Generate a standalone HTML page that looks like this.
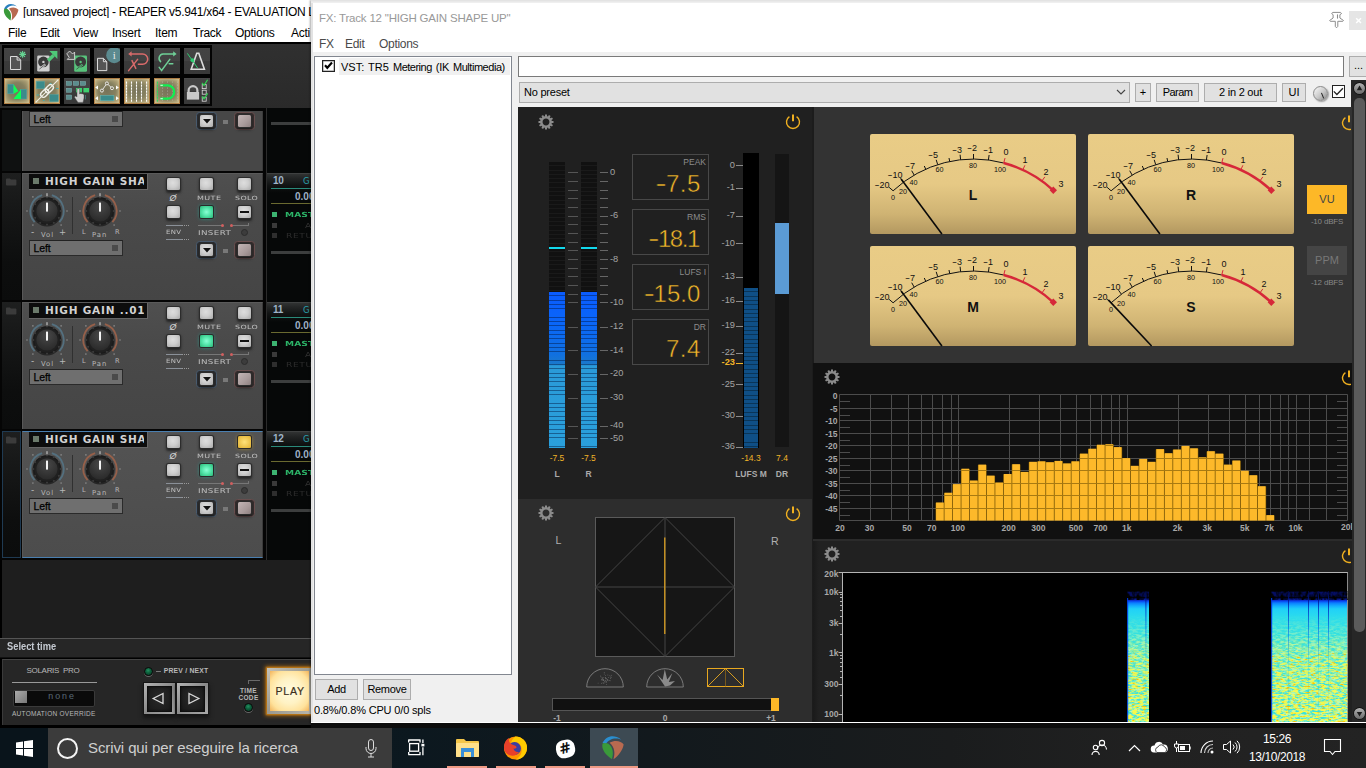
<!DOCTYPE html>
<html><head><meta charset="utf-8"><title>REAPER FX</title>
<style>
*{box-sizing:border-box;margin:0;padding:0}
html,body{width:1366px;height:768px;overflow:hidden;background:#1d1d1d;font-family:"Liberation Sans",sans-serif;font-size:12px;color:#000}
.a{position:absolute}
.t{position:absolute;white-space:nowrap;line-height:1}
svg{position:absolute;overflow:visible}
.sui{font-family:"Liberation Sans",sans-serif}
.tb{position:absolute;width:26px;height:26px;overflow:hidden;background:linear-gradient(#4a4a4a 0,#434343 1px,#424242 48%,#3a3a3a 52%,#383838 100%)}
.tb.on{background:radial-gradient(ellipse at center,#77735a 0%,#85805f 45%,#b3a578 80%,#cdb888 100%);box-shadow:inset 0 0 0 1px rgba(165,105,45,.75),inset 0 0 3px 1px rgba(225,210,160,.8)}
.btn{position:absolute;width:13.2px;height:12.2px;border-radius:1.5px;background:radial-gradient(ellipse at 45% 40%,#dedede 0,#cfcfcf 45%,#a8a8a8 100%);box-shadow:0 0 0 1px #2c2c2c,0 1.5px 2.5px 1px rgba(20,20,20,.7)}
.wbtn{position:absolute;background:#e1e1e1;border:1px solid #adadad;font-size:11px;text-align:center;color:#000;white-space:nowrap}
</style></head><body>
<svg width="0" height="0"><defs><radialGradient id="kg" cx=".5" cy=".3" r=".8"><stop offset="0" stop-color="#484848"/><stop offset=".6" stop-color="#333"/><stop offset="1" stop-color="#262626"/></radialGradient></defs></svg><div class="a" style="left:0;top:0;width:1366px;height:42px;background:#fff"></div><svg style="left:2.5px;top:2.5px" width="17" height="18" viewBox="0 0 16 16" preserveAspectRatio="none"><path d="M1 5 C3 1 8 -1 13 3 C10 1.5 5 2 3 6z" fill="#2a7fc0"/><path d="M1 5.5 C0 9 3 13 7 15.5 C8 12 8 8 4.5 5.5 C3 4.8 1.5 5 1 5.5z" fill="#3a9a3a"/><path d="M5.5 5 C9 3 13 4 14.5 6 C14 9.5 11 13.5 8 15.5 C9 12 9 8 5.5 5z" fill="#b86a50"/></svg><div class="t" style="left:23px;top:6px;font-size:12px;color:#000;width:289px;overflow:hidden;letter-spacing:-.32px">[unsaved project] - REAPER v5.941/x64 - EVALUATION L</div><div class="t" style="left:8px;top:27px;font-size:12px;letter-spacing:-.25px">File</div><div class="t" style="left:40px;top:27px;font-size:12px;letter-spacing:-.25px">Edit</div><div class="t" style="left:73px;top:27px;font-size:12px;letter-spacing:-.25px">View</div><div class="t" style="left:112px;top:27px;font-size:12px;letter-spacing:-.25px">Insert</div><div class="t" style="left:155px;top:27px;font-size:12px;letter-spacing:-.25px">Item</div><div class="t" style="left:193px;top:27px;font-size:12px;letter-spacing:-.25px">Track</div><div class="t" style="left:235px;top:27px;font-size:12px;letter-spacing:-.25px">Options</div><div class="t" style="left:291px;top:27px;font-size:12px;letter-spacing:-.25px">Acti</div><div class="a" style="left:0;top:42px;width:312px;height:69px;background:#000"></div><div class="a" style="left:0;top:44px;width:312px;height:63.5px;background:linear-gradient(#303030,#2a2a2a)"></div><div class="a" style="left:2px;top:45px;width:210px;height:61px;background:#030303"></div><div class="tb" style="left:4px;top:48px"><svg style="left:0;top:0" width="26" height="26" viewBox="0 0 26 26"><path d="M6.5 8.5 H13.1 L16.7 12.1 V21.5 H6.5z" fill="#555" stroke="#dcdcdc" stroke-width="1"/><path d="M13.1 8.5 V12.1 H16.7" fill="none" stroke="#dcdcdc" stroke-width="1"/><path d="M15.2 6.4 L22.0 6.4 M16.2 4.0 L21.0 8.8 M18.6 3.0 L18.6 9.8 M21.0 4.0 L16.2 8.8 " stroke="#66d392" stroke-width="1.1" fill="none"/></svg></div><div class="tb" style="left:34px;top:48px"><svg style="left:0;top:0" width="26" height="26" viewBox="0 0 26 26"><rect x="3.2" y="7.4" width="12.4" height="16.2" rx="1.3" fill="#d0d0d0"/><circle cx="9.4" cy="13.88" r="5.3" fill="#3a3a3a"/><circle cx="9.4" cy="13.88" r="1.2" fill="#d0d0d0"/><path d="M5.4 21.1 L11.4 16.380000000000003" stroke="#d0d0d0" stroke-width="2"/><path d="M5.4 21.1 L11.4 16.380000000000003" stroke="#3a3a3a" stroke-width=".7"/><rect x="10.9" y="19.1" width="3.7" height="3.6" fill="#d0d0d0"/><path d="M14.2 12.6 L19.6 7.2" stroke="#4fc878" stroke-width="3.4"/><path d="M15.4 3 H23.4 V11z" fill="#4fc878"/></svg></div><div class="tb" style="left:64px;top:48px"><svg style="left:0;top:0" width="26" height="26" viewBox="0 0 26 26"><rect x="10.2" y="7.4" width="12.8" height="16.4" rx="1.3" fill="#58c47c"/><circle cx="16.6" cy="13.96" r="5.5" fill="#3a3a3a"/><circle cx="16.6" cy="13.96" r="1.2" fill="#58c47c"/><path d="M12.399999999999999 21.299999999999997 L18.6 16.46" stroke="#58c47c" stroke-width="2"/><path d="M12.399999999999999 21.299999999999997 L18.6 16.46" stroke="#3a3a3a" stroke-width=".7"/><rect x="18.1" y="19.2" width="3.8" height="3.6" fill="#58c47c"/><path d="M2.8 5.8 L5.6 3 L8.6 6 L10.6 4 V11.4 H3.2 L5.2 9.4z" fill="#5a5a5a" stroke="#d8d8d8" stroke-width=".9" stroke-linejoin="miter"/></svg></div><div class="tb" style="left:94px;top:48px"><svg style="left:0;top:0" width="26" height="26" viewBox="0 0 26 26"><path d="M3.5 10.3 H9.4 L12.8 13.700000000000001 V22.6 H3.5z" fill="#555" stroke="#dcdcdc" stroke-width="1"/><path d="M9.4 10.3 V13.700000000000001 H12.8" fill="none" stroke="#dcdcdc" stroke-width="1"/><clipPath id="cpi"><rect x="0" y="0" width="26" height="26"/></clipPath><g clip-path="url(#cpi)"><circle cx="20.2" cy="7.2" r="8" fill="#5b8a8f"/><text x="20.2" y="11.4" font-size="11" font-family="Liberation Serif,serif" fill="#e8e8e8" text-anchor="middle">i</text></g></svg></div><div class="tb" style="left:124px;top:48px"><svg style="left:0;top:0" width="26" height="26" viewBox="0 0 26 26"><path d="M6.4 5.9 H18.6 A5.15 5.15 0 0 1 18.6 16.2 H13.8" fill="none" stroke="#d96b6b" stroke-width="1.5"/><path d="M4.2 5.9 L7.6 3.3 V8.5z" fill="#d96b6b"/><path d="M4.6 22.6 L13.6 11.4 M8 12.6 L11.8 20.4" fill="none" stroke="#d96b6b" stroke-width="1.5" stroke-linecap="round"/></svg></div><div class="tb" style="left:154px;top:48px"><svg style="left:0;top:0" width="26" height="26" viewBox="0 0 26 26"><path d="M19.8 5.9 H9 A4.4 4.4 0 0 0 6.6 13.6" fill="none" stroke="#6fcf97" stroke-width="1.5" stroke-linecap="round"/><path d="M22.6 5.9 L19.2 3.3 V8.5z" fill="#6fcf97"/><path d="M5.2 19.4 L7.6 22.4 L15.8 11.4 M15.2 15.7 H18.8" fill="none" stroke="#6fcf97" stroke-width="1.5" stroke-linecap="round"/></svg></div><div class="tb" style="left:184px;top:48px"><svg style="left:0;top:0" width="26" height="26" viewBox="0 0 26 26"><path d="M12.8 5.2 H14.8 L20.4 21.2 H7.2z" fill="none" stroke="#dcdcdc" stroke-width="1.6" stroke-linejoin="miter"/><path d="M3.4 5.4 L13.6 20" stroke="#2ecc71" stroke-width="1"/><circle cx="8.4" cy="12.2" r="1.9" fill="#2ecc71"/></svg></div><div class="tb on" style="left:4px;top:78px"><svg style="left:0;top:0" width="26" height="26" viewBox="0 0 26 26"><rect x="3.8" y="6.2" width="6" height="9.6" fill="#3b8b8b" stroke="#5aa" stroke-width=".4"/><rect x="16.4" y="11.2" width="6.2" height="9.8" fill="#3b8b8b" stroke="#5aa" stroke-width=".4"/><path d="M9.6 6.2 L14.4 13.2 L9.6 15.8z M9.4 21 L17 11.4 V21z" fill="#0dff55"/></svg></div><div class="tb on" style="left:34px;top:78px"><svg style="left:0;top:0" width="26" height="26" viewBox="0 0 26 26"><rect x="2.3" y="3.4" width="8.2" height="7.2" fill="#3b8b8b" stroke="#5aa" stroke-width=".4"/><rect x="15.8" y="16.5" width="8.6" height="7.2" fill="#3b8b8b" stroke="#5aa" stroke-width=".4"/><path d="M15.5 5.5h2 M22 10.5h2.5 M2.5 17h2.5 M9 22.5h1.5" stroke="#4aa" stroke-width="1"/><g transform="rotate(-45 13 13)" fill="none" stroke="#f0f0e8"><path d="M-3 13 H29" stroke-width="1"/><rect x="5.2" y="10.2" width="9.2" height="5.6" rx="2.8" stroke-width="1.4"/><rect x="11.6" y="10.2" width="9.2" height="5.6" rx="2.8" stroke-width="1.4"/></g></svg></div><div class="tb" style="left:64px;top:78px"><svg style="left:0;top:0" width="26" height="26" viewBox="0 0 26 26"><rect x="2.3" y="3.4" width="5.4" height="4" fill="#5b8d8d" stroke="#8bb" stroke-width=".4"/><rect x="9.3" y="3.4" width="5.4" height="4" fill="#5b8d8d" stroke="#8bb" stroke-width=".4"/><rect x="16.3" y="3.4" width="5.4" height="4" fill="#5b8d8d" stroke="#8bb" stroke-width=".4"/><rect x="2.3" y="10.2" width="5.4" height="4.2" fill="#5b8d8d" stroke="#8bb" stroke-width=".4"/><rect x="2.3" y="17" width="5.4" height="4.4" fill="#5b8d8d" stroke="#8bb" stroke-width=".4"/><rect x="12" y="10" width="6" height="4.4" fill="#3fcf6f"/><rect x="19.4" y="10" width="5.6" height="4.4" fill="#3fcf6f"/><path d="M21.5 17 V21.4" stroke="#4a9a9a" stroke-width=".6"/><path d="M13 11.8 a1.3 1.3 0 0 1 2.6 0 V16 l1 -.6 l1.2 .3 l1.2 .2 l1 .8 V20 l-1 4.4 H14 L10.6 19.4 a1.1 1.1 0 0 1 1.8-1 L13 19z" fill="#cfcfcf" stroke="#444" stroke-width=".4"/></svg></div><div class="tb on" style="left:94px;top:78px"><svg style="left:0;top:0" width="26" height="26" viewBox="0 0 26 26"><path d="M7.9 12.6 L12.9 5.4 L18 10.2" fill="none" stroke="#eee" stroke-width=".9"/><circle cx="7.9" cy="12.6" r="1.5" fill="#77735a" stroke="#f4f4f4" stroke-width=".9"/><circle cx="12.9" cy="5.4" r="1.5" fill="#77735a" stroke="#f4f4f4" stroke-width=".9"/><circle cx="18" cy="10.2" r="1.5" fill="#77735a" stroke="#f4f4f4" stroke-width=".9"/><path d="M1.2 9.4 L4 7.4 V11.4z M24.8 9.4 L22 7.4 V11.4z M1.2 20.2 L4 18.2 V22.2z M24.8 20.2 L22 18.2 V22.2z" fill="#fff"/><rect x="6.5" y="17.4" width="13.4" height="5.4" fill="#3b8b8b" stroke="#6bb" stroke-width=".5"/></svg></div><div class="tb on" style="left:124px;top:78px"><svg style="left:0;top:0" width="26" height="26" viewBox="0 0 26 26"><path d="M2.5 3.6 V24" stroke="#fff" stroke-width="1.1" stroke-dasharray="2.1 .9"/><path d="M7.5 3.6 V24" stroke="#fff" stroke-width="1.1" stroke-dasharray="2.1 .9"/><path d="M12.5 3.6 V24" stroke="#fff" stroke-width="1.1" stroke-dasharray="2.1 .9"/><path d="M17.5 3.6 V24" stroke="#fff" stroke-width="1.1" stroke-dasharray="2.1 .9"/><path d="M22.6 3.6 V24" stroke="#fff" stroke-width="1.1" stroke-dasharray="2.1 .9"/></svg></div><div class="tb on" style="left:154px;top:78px"><svg style="left:0;top:0" width="26" height="26" viewBox="0 0 26 26"><path d="M3.4 3.6 V24" stroke="#20e060" stroke-width="1" stroke-dasharray="2.1 .9"/><path d="M8.5 3.6 V24" stroke="#ddd" stroke-width=".8" stroke-dasharray="1 2" opacity=".55"/><path d="M13.5 3.6 V24" stroke="#ddd" stroke-width=".8" stroke-dasharray="1 2" opacity=".55"/><path d="M18.4 3.6 V24" stroke="#ddd" stroke-width=".8" stroke-dasharray="1 2" opacity=".55"/><path d="M23.4 3.6 V24" stroke="#ddd" stroke-width=".8" stroke-dasharray="1 2" opacity=".55"/><path d="M6.4 7.4 H13.6 A6.6 6.6 0 0 1 13.6 20.6 H6.4" fill="none" stroke="#10f050" stroke-width="2.2"/><path d="M6.4 7.4 h2.4 M6.4 20.6 h2.4" stroke="#b8ffc8" stroke-width="1.2"/></svg></div><div class="tb" style="left:184px;top:78px"><svg style="left:0;top:0" width="26" height="26" viewBox="0 0 26 26"><rect x="2.9" y="14" width="12.2" height="7.6" fill="#c9c9c9"/><path d="M4.6 14 V12.6 A4.4 4.4 0 0 1 13.4 12.6 V14" fill="none" stroke="#c9c9c9" stroke-width="2.2"/><rect x="18.2" y="6.6" width="4" height="4" fill="none" stroke="#ddd" stroke-width=".8"/><rect x="18.2" y="12.2" width="4" height="4" fill="none" stroke="#ddd" stroke-width=".8"/><rect x="18.2" y="19.2" width="4" height="4" fill="none" stroke="#ddd" stroke-width=".8"/><path d="M18 4.8 L20 7.4 L23.6 1.8 M18 18.4 L20 21 L23.6 15.4" fill="none" stroke="#2fd050" stroke-width="1.2"/></svg></div><div class="a" style="left:0;top:108px;width:312px;height:452px;background:#050505"></div><div class="a" style="left:265.8px;top:108px;width:46.2px;height:452px;background:#060808;border-left:1px solid #2c2c2c"></div><div class="a" style="left:2px;top:110px;width:19px;height:61px;background:#0f1111"></div><div class="a" style="left:22px;top:110.5px;width:241px;height:60.5px;background:#474747;border-left:1px solid #555;border-right:1px solid #3a3a3a"></div><div class="a" style="left:29px;top:111px;width:94px;height:16px;background:#6f6f6f;border:1px solid #2a2a2a;border-top-color:#222"></div><div class="t" style="left:33.5px;top:114.3px;font-size:10.5px;color:#000;letter-spacing:-.1px;-webkit-text-stroke:.25px #000">Left</div><div class="a" style="left:112px;top:116px;width:6px;height:6px;background:#4a4a4a"></div><div class="a" style="left:196px;top:111.5px;width:20.5px;height:18.8px;border-radius:3.5px;border:1px solid #4a5c70;background:#2c2e31"></div><div class="btn" style="left:200px;top:114.7px"><svg style="left:2.6px;top:4px" width="8" height="5"><path d="M0 0h8l-4 4.6z" fill="#111"/></svg></div><div class="a" style="left:223px;top:119.7px;width:5px;height:4.4px;background:#787878"></div><div class="a" style="left:234.1px;top:111.5px;width:20.5px;height:18.8px;border-radius:3.5px;border:1px solid #6a5050;background:#352e2e"></div><div class="btn" style="left:238px;top:114.7px;background:linear-gradient(135deg,#c4b6b6,#a89a9a 60%,#8e8080)"></div><div class="a" style="left:271px;top:122.1px;width:41px;height:2.9px;background:#3c3e3e"></div><div class="a" style="left:2px;top:173px;width:19px;height:127px;background:linear-gradient(#1e1f1f 0,#171818 25%,#0d0e0e 70%,#0b0c0c 100%)"></div><svg style="left:5.8px;top:178.4px" width="10.4" height="7.6" viewBox="0 0 12 10" preserveAspectRatio="none"><path d="M0 1.5 a1 1 0 0 1 1-1 h3.5 l1.2 1.5 h5.3 a1 1 0 0 1 1 1 v6 a1 1 0 0 1-1 1 h-10 a1 1 0 0 1-1-1z" fill="#3b3b3b"/></svg><div class="a" style="left:22px;top:173px;width:241px;height:127px;background:linear-gradient(#4f4f4f 0,#4a4a4a 30%,#454545 100%);border-top:1px solid #5a5a5a;border-left:1px solid #585858;border-right:1px solid #3a3a3a"></div><div class="a" style="left:29px;top:174px;width:119px;height:16px;background:#0d0d0d;border-bottom:1px solid #666;border-right:1px solid #666"></div><div class="a" style="left:33px;top:178px;width:6px;height:6px;background:#6b7a6b"></div><div class="t" style="left:45px;top:176px;font-family:'DejaVu Sans',sans-serif;font-weight:bold;font-size:10.5px;color:#d2d2d2;letter-spacing:0.78px;width:99px;overflow:hidden">HIGH GAIN SHA</div><svg style="left:24px;top:188.3px" width="46" height="46" viewBox="-23 -23 46 46"><path d="M-12.41 11.17 A16.7 16.7 0 0 1 -4.88 -15.97 M4.88 -15.97 A16.7 16.7 0 0 1 12.41 11.17" fill="none" stroke="#54707f" stroke-width="1.8"/><rect x="-.9" y="-17.8" width="1.8" height="3.6" fill="#9a9a9a"/><circle cy="1" r="14.6" fill="#262626"/><circle r="13.8" fill="#1b1b1b"/><circle cx="0.0" cy="-13.6" r="1.1" fill="#3a3a3a"/><circle cx="6.8" cy="-11.8" r="1.1" fill="#3a3a3a"/><circle cx="11.8" cy="-6.8" r="1.1" fill="#3a3a3a"/><circle cx="13.6" cy="-0.0" r="1.1" fill="#3a3a3a"/><circle cx="11.8" cy="6.8" r="1.1" fill="#3a3a3a"/><circle cx="6.8" cy="11.8" r="1.1" fill="#3a3a3a"/><circle cx="0.0" cy="13.6" r="1.1" fill="#3a3a3a"/><circle cx="-6.8" cy="11.8" r="1.1" fill="#3a3a3a"/><circle cx="-11.8" cy="6.8" r="1.1" fill="#3a3a3a"/><circle cx="-13.6" cy="0.0" r="1.1" fill="#3a3a3a"/><circle cx="-11.8" cy="-6.8" r="1.1" fill="#3a3a3a"/><circle cx="-6.8" cy="-11.8" r="1.1" fill="#3a3a3a"/><circle r="12.6" fill="#202020"/><circle r="10.6" fill="url(#kg)"/><rect x="-1" y="-8.4" width="2" height="9" fill="#f4f4f4"/><circle cx="-14.1" cy="14.1" r=".8" fill="#8c8c8c"/><circle cx="-20.0" cy="-0.0" r=".8" fill="#8c8c8c"/><circle cx="-14.1" cy="-14.1" r=".8" fill="#8c8c8c"/><circle cx="14.1" cy="-14.1" r=".8" fill="#8c8c8c"/><circle cx="20.0" cy="-0.0" r=".8" fill="#8c8c8c"/><circle cx="14.1" cy="14.1" r=".8" fill="#8c8c8c"/></svg><svg style="left:77px;top:188.3px" width="46" height="46" viewBox="-23 -23 46 46"><path d="M-12.41 11.17 A16.7 16.7 0 0 1 -4.88 -15.97 M4.88 -15.97 A16.7 16.7 0 0 1 12.41 11.17" fill="none" stroke="#96604a" stroke-width="1.8"/><rect x="-.9" y="-17.8" width="1.8" height="3.6" fill="#9a9a9a"/><circle cy="1" r="14.6" fill="#262626"/><circle r="13.8" fill="#1b1b1b"/><circle cx="0.0" cy="-13.6" r="1.1" fill="#3a3a3a"/><circle cx="6.8" cy="-11.8" r="1.1" fill="#3a3a3a"/><circle cx="11.8" cy="-6.8" r="1.1" fill="#3a3a3a"/><circle cx="13.6" cy="-0.0" r="1.1" fill="#3a3a3a"/><circle cx="11.8" cy="6.8" r="1.1" fill="#3a3a3a"/><circle cx="6.8" cy="11.8" r="1.1" fill="#3a3a3a"/><circle cx="0.0" cy="13.6" r="1.1" fill="#3a3a3a"/><circle cx="-6.8" cy="11.8" r="1.1" fill="#3a3a3a"/><circle cx="-11.8" cy="6.8" r="1.1" fill="#3a3a3a"/><circle cx="-13.6" cy="0.0" r="1.1" fill="#3a3a3a"/><circle cx="-11.8" cy="-6.8" r="1.1" fill="#3a3a3a"/><circle cx="-6.8" cy="-11.8" r="1.1" fill="#3a3a3a"/><circle r="12.6" fill="#202020"/><circle r="10.6" fill="url(#kg)"/><rect x="-1" y="-8.4" width="2" height="9" fill="#f4f4f4"/><circle cx="-14.1" cy="14.1" r=".8" fill="#8c8c8c"/><circle cx="-20.0" cy="-0.0" r=".8" fill="#8c8c8c"/><circle cx="-14.1" cy="-14.1" r=".8" fill="#8c8c8c"/><circle cx="14.1" cy="-14.1" r=".8" fill="#8c8c8c"/><circle cx="20.0" cy="-0.0" r=".8" fill="#8c8c8c"/><circle cx="14.1" cy="14.1" r=".8" fill="#8c8c8c"/></svg><div class="a" style="left:72px;top:197px;width:1px;height:36.5px;background:#303030"></div><div class="t" style="left:31px;top:227.6px;font-family:'DejaVu Sans',sans-serif;font-size:6.8px;color:#b8b8b8;font-size:9px;color:#c0c0c0">-</div><div class="t" style="left:41px;top:231.6px;font-family:'DejaVu Sans',sans-serif;font-size:6.8px;color:#b8b8b8;letter-spacing:1px">Vol</div><div class="t" style="left:59px;top:228px;font-family:'DejaVu Sans',sans-serif;font-size:6.8px;color:#b8b8b8;font-size:8.5px">+</div><div class="t" style="left:82px;top:229.4px;font-family:'DejaVu Sans',sans-serif;font-size:6.8px;color:#b8b8b8;font-size:6.6px">L</div><div class="t" style="left:92px;top:231.6px;font-family:'DejaVu Sans',sans-serif;font-size:6.8px;color:#b8b8b8;letter-spacing:1px">Pan</div><div class="t" style="left:115px;top:229.4px;font-family:'DejaVu Sans',sans-serif;font-size:6.8px;color:#b8b8b8;font-size:6.6px">R</div><div class="a" style="left:29px;top:240px;width:94px;height:16px;background:#6f6f6f;border:1px solid #2a2a2a;border-top-color:#222"></div><div class="t" style="left:33.5px;top:243.3px;font-size:10.5px;color:#000;letter-spacing:-.1px;-webkit-text-stroke:.25px #000">Left</div><div class="a" style="left:112px;top:245px;width:6px;height:6px;background:#4a4a4a"></div><div class="btn" style="left:167px;top:177.9px;"></div><div class="btn" style="left:200px;top:177.9px;"></div><div class="btn" style="left:238px;top:177.9px;"></div><div class="btn" style="left:167px;top:206px"></div><div class="btn" style="left:200px;top:206px;background:radial-gradient(#8affd4 0,#5aeab0 40%,#28b878 100%);box-shadow:0 0 0 1px #2a2a2a,0 0 4px #2a9"></div><div class="btn" style="left:238px;top:206px"><div class="a" style="left:2.2px;top:4.9px;width:9px;height:2px;background:#111"></div></div><div class="t" style="left:169.5px;top:193.6px;font-size:9px;color:#d8d8d8;font-style:italic">Ø</div><div class="t" style="left:196.6px;top:195.8px;font-family:'DejaVu Sans',sans-serif;font-size:5.8px;color:#c0c0c0;letter-spacing:.3px;transform:scaleX(1.5);transform-origin:0 0;transform:scaleX(1.38)">MUTE</div><div class="t" style="left:234.7px;top:195.8px;font-family:'DejaVu Sans',sans-serif;font-size:5.8px;color:#c0c0c0;letter-spacing:.3px;transform:scaleX(1.5);transform-origin:0 0;transform:scaleX(1.36)">SOLO</div><div class="t" style="left:166px;top:230.2px;font-family:'DejaVu Sans',sans-serif;font-size:5.8px;color:#c0c0c0;letter-spacing:.3px;transform:scaleX(1.5);transform-origin:0 0;transform:scaleX(1.2)">ENV</div><div class="t" style="left:197.6px;top:229.8px;font-family:'DejaVu Sans',sans-serif;font-size:5.8px;color:#c0c0c0;letter-spacing:.3px;transform:scaleX(1.5);transform-origin:0 0;font-size:6.6px;transform:scaleX(1.32)">INSERT</div><div class="a" style="left:166px;top:225px;width:16px;height:1px;background:#8a9098"></div><div class="a" style="left:182px;top:225px;width:7px;height:1px;border-top:1px dotted #999"></div><div class="a" style="left:166px;top:239px;width:16px;height:1px;background:#8a9098"></div><div class="a" style="left:182px;top:239px;width:7px;height:1px;border-top:1px dotted #999"></div><div class="a" style="left:198px;top:225px;width:24px;height:1px;background:#777"></div><div class="a" style="left:221px;top:224px;width:3px;height:3px;background:#d06060;border-radius:2px"></div><div class="a" style="left:230px;top:224px;width:3px;height:3px;background:#d06060;border-radius:2px"></div><div class="a" style="left:233px;top:223px;width:16px;height:3px;border-bottom:1px solid #777;border-right:1px solid #777"></div><div class="a" style="left:240.9px;top:229px;width:7px;height:7px;border-radius:4px;background:#3c3c3c;border:1px solid #2c2c2c"></div><div class="a" style="left:196px;top:240.5px;width:20.5px;height:18.8px;border-radius:3.5px;border:1px solid #4a5c70;background:#2c2e31"></div><div class="btn" style="left:200px;top:243.7px"><svg style="left:2.6px;top:4px" width="8" height="5"><path d="M0 0h8l-4 4.6z" fill="#111"/></svg></div><div class="a" style="left:223px;top:248.7px;width:5px;height:4.4px;background:#787878"></div><div class="a" style="left:234.1px;top:240.5px;width:20.5px;height:18.8px;border-radius:3.5px;border:1px solid #6a5050;background:#352e2e"></div><div class="btn" style="left:238px;top:243.7px;background:linear-gradient(135deg,#c4b6b6,#a89a9a 60%,#8e8080)"></div><div class="a" style="left:266.7px;top:172.8px;width:46px;height:22px;background:linear-gradient(#4a4c4c 0,#303232 1.2px,#242626 5px,#121414 12px,#060808 20px)"></div><div class="t" style="left:273px;top:175.8px;font-family:'Liberation Sans',sans-serif;font-weight:bold;font-size:10px;color:#9fb4c8;letter-spacing:-.2px">10</div><div class="t" style="left:303px;top:177px;font-size:8.5px;color:#2aa0b0;font-family:'DejaVu Sans',sans-serif">G</div><div class="a" style="left:271px;top:188px;width:41px;height:1px;background:#2a8a7a"></div><div class="t" style="left:295px;top:192px;font-family:'Liberation Sans',sans-serif;font-weight:bold;font-size:10px;color:#9fb0c4">0.00</div><div class="a" style="left:271px;top:203px;width:41px;height:1px;background:#6a6a30"></div><div class="a" style="left:272px;top:212px;width:5px;height:5px;background:#3cb371"></div><div class="t" style="left:285px;top:211.5px;font-family:'DejaVu Sans',sans-serif;font-size:7px;letter-spacing:.1px;transform:scaleX(1.3);transform-origin:0 0;color:#2cb468;font-weight:bold">MAST</div><div class="a" style="left:272px;top:223px;width:5px;height:5px;background:#3a3a3a"></div><div class="t" style="left:305px;top:222.5px;font-family:'DejaVu Sans',sans-serif;font-size:7px;letter-spacing:.1px;transform:scaleX(1.3);transform-origin:0 0;color:#333">A</div><div class="a" style="left:272px;top:233px;width:5px;height:5px;background:#2e2e2e"></div><div class="t" style="left:286px;top:232.5px;font-family:'DejaVu Sans',sans-serif;font-size:7px;letter-spacing:.1px;transform:scaleX(1.3);transform-origin:0 0;color:#2c2c2c;letter-spacing:.5px">RETU</div><div class="a" style="left:271px;top:251.1px;width:41px;height:2.9px;background:#3c3e3e"></div><div class="a" style="left:2px;top:302px;width:19px;height:127px;background:linear-gradient(#1e1f1f 0,#171818 25%,#0d0e0e 70%,#0b0c0c 100%)"></div><svg style="left:5.8px;top:307.4px" width="10.4" height="7.6" viewBox="0 0 12 10" preserveAspectRatio="none"><path d="M0 1.5 a1 1 0 0 1 1-1 h3.5 l1.2 1.5 h5.3 a1 1 0 0 1 1 1 v6 a1 1 0 0 1-1 1 h-10 a1 1 0 0 1-1-1z" fill="#3b3b3b"/></svg><div class="a" style="left:22px;top:302px;width:241px;height:127px;background:linear-gradient(#4f4f4f 0,#4a4a4a 30%,#454545 100%);border-top:1px solid #5a5a5a;border-left:1px solid #585858;border-right:1px solid #3a3a3a"></div><div class="a" style="left:29px;top:303px;width:119px;height:16px;background:#0d0d0d;border-bottom:1px solid #666;border-right:1px solid #666"></div><div class="a" style="left:33px;top:307px;width:6px;height:6px;background:#6b7a6b"></div><div class="t" style="left:45px;top:305px;font-family:'DejaVu Sans',sans-serif;font-weight:bold;font-size:10.5px;color:#d2d2d2;letter-spacing:0.78px;width:99px;overflow:hidden">HIGH GAIN ..01</div><svg style="left:24px;top:317.3px" width="46" height="46" viewBox="-23 -23 46 46"><path d="M-12.41 11.17 A16.7 16.7 0 0 1 -4.88 -15.97 M4.88 -15.97 A16.7 16.7 0 0 1 12.41 11.17" fill="none" stroke="#54707f" stroke-width="1.8"/><rect x="-.9" y="-17.8" width="1.8" height="3.6" fill="#9a9a9a"/><circle cy="1" r="14.6" fill="#262626"/><circle r="13.8" fill="#1b1b1b"/><circle cx="0.0" cy="-13.6" r="1.1" fill="#3a3a3a"/><circle cx="6.8" cy="-11.8" r="1.1" fill="#3a3a3a"/><circle cx="11.8" cy="-6.8" r="1.1" fill="#3a3a3a"/><circle cx="13.6" cy="-0.0" r="1.1" fill="#3a3a3a"/><circle cx="11.8" cy="6.8" r="1.1" fill="#3a3a3a"/><circle cx="6.8" cy="11.8" r="1.1" fill="#3a3a3a"/><circle cx="0.0" cy="13.6" r="1.1" fill="#3a3a3a"/><circle cx="-6.8" cy="11.8" r="1.1" fill="#3a3a3a"/><circle cx="-11.8" cy="6.8" r="1.1" fill="#3a3a3a"/><circle cx="-13.6" cy="0.0" r="1.1" fill="#3a3a3a"/><circle cx="-11.8" cy="-6.8" r="1.1" fill="#3a3a3a"/><circle cx="-6.8" cy="-11.8" r="1.1" fill="#3a3a3a"/><circle r="12.6" fill="#202020"/><circle r="10.6" fill="url(#kg)"/><rect x="-1" y="-8.4" width="2" height="9" fill="#f4f4f4"/><circle cx="-14.1" cy="14.1" r=".8" fill="#8c8c8c"/><circle cx="-20.0" cy="-0.0" r=".8" fill="#8c8c8c"/><circle cx="-14.1" cy="-14.1" r=".8" fill="#8c8c8c"/><circle cx="14.1" cy="-14.1" r=".8" fill="#8c8c8c"/><circle cx="20.0" cy="-0.0" r=".8" fill="#8c8c8c"/><circle cx="14.1" cy="14.1" r=".8" fill="#8c8c8c"/></svg><svg style="left:77px;top:317.3px" width="46" height="46" viewBox="-23 -23 46 46"><path d="M-12.41 11.17 A16.7 16.7 0 0 1 -4.88 -15.97 M4.88 -15.97 A16.7 16.7 0 0 1 12.41 11.17" fill="none" stroke="#96604a" stroke-width="1.8"/><rect x="-.9" y="-17.8" width="1.8" height="3.6" fill="#9a9a9a"/><circle cy="1" r="14.6" fill="#262626"/><circle r="13.8" fill="#1b1b1b"/><circle cx="0.0" cy="-13.6" r="1.1" fill="#3a3a3a"/><circle cx="6.8" cy="-11.8" r="1.1" fill="#3a3a3a"/><circle cx="11.8" cy="-6.8" r="1.1" fill="#3a3a3a"/><circle cx="13.6" cy="-0.0" r="1.1" fill="#3a3a3a"/><circle cx="11.8" cy="6.8" r="1.1" fill="#3a3a3a"/><circle cx="6.8" cy="11.8" r="1.1" fill="#3a3a3a"/><circle cx="0.0" cy="13.6" r="1.1" fill="#3a3a3a"/><circle cx="-6.8" cy="11.8" r="1.1" fill="#3a3a3a"/><circle cx="-11.8" cy="6.8" r="1.1" fill="#3a3a3a"/><circle cx="-13.6" cy="0.0" r="1.1" fill="#3a3a3a"/><circle cx="-11.8" cy="-6.8" r="1.1" fill="#3a3a3a"/><circle cx="-6.8" cy="-11.8" r="1.1" fill="#3a3a3a"/><circle r="12.6" fill="#202020"/><circle r="10.6" fill="url(#kg)"/><rect x="-1" y="-8.4" width="2" height="9" fill="#f4f4f4"/><circle cx="-14.1" cy="14.1" r=".8" fill="#8c8c8c"/><circle cx="-20.0" cy="-0.0" r=".8" fill="#8c8c8c"/><circle cx="-14.1" cy="-14.1" r=".8" fill="#8c8c8c"/><circle cx="14.1" cy="-14.1" r=".8" fill="#8c8c8c"/><circle cx="20.0" cy="-0.0" r=".8" fill="#8c8c8c"/><circle cx="14.1" cy="14.1" r=".8" fill="#8c8c8c"/></svg><div class="a" style="left:72px;top:326px;width:1px;height:36.5px;background:#303030"></div><div class="t" style="left:31px;top:356.6px;font-family:'DejaVu Sans',sans-serif;font-size:6.8px;color:#b8b8b8;font-size:9px;color:#c0c0c0">-</div><div class="t" style="left:41px;top:360.6px;font-family:'DejaVu Sans',sans-serif;font-size:6.8px;color:#b8b8b8;letter-spacing:1px">Vol</div><div class="t" style="left:59px;top:357px;font-family:'DejaVu Sans',sans-serif;font-size:6.8px;color:#b8b8b8;font-size:8.5px">+</div><div class="t" style="left:82px;top:358.4px;font-family:'DejaVu Sans',sans-serif;font-size:6.8px;color:#b8b8b8;font-size:6.6px">L</div><div class="t" style="left:92px;top:360.6px;font-family:'DejaVu Sans',sans-serif;font-size:6.8px;color:#b8b8b8;letter-spacing:1px">Pan</div><div class="t" style="left:115px;top:358.4px;font-family:'DejaVu Sans',sans-serif;font-size:6.8px;color:#b8b8b8;font-size:6.6px">R</div><div class="a" style="left:29px;top:369px;width:94px;height:16px;background:#6f6f6f;border:1px solid #2a2a2a;border-top-color:#222"></div><div class="t" style="left:33.5px;top:372.3px;font-size:10.5px;color:#000;letter-spacing:-.1px;-webkit-text-stroke:.25px #000">Left</div><div class="a" style="left:112px;top:374px;width:6px;height:6px;background:#4a4a4a"></div><div class="btn" style="left:167px;top:306.9px;"></div><div class="btn" style="left:200px;top:306.9px;"></div><div class="btn" style="left:238px;top:306.9px;"></div><div class="btn" style="left:167px;top:335px"></div><div class="btn" style="left:200px;top:335px;background:radial-gradient(#8affd4 0,#5aeab0 40%,#28b878 100%);box-shadow:0 0 0 1px #2a2a2a,0 0 4px #2a9"></div><div class="btn" style="left:238px;top:335px"><div class="a" style="left:2.2px;top:4.9px;width:9px;height:2px;background:#111"></div></div><div class="t" style="left:169.5px;top:322.6px;font-size:9px;color:#d8d8d8;font-style:italic">Ø</div><div class="t" style="left:196.6px;top:324.8px;font-family:'DejaVu Sans',sans-serif;font-size:5.8px;color:#c0c0c0;letter-spacing:.3px;transform:scaleX(1.5);transform-origin:0 0;transform:scaleX(1.38)">MUTE</div><div class="t" style="left:234.7px;top:324.8px;font-family:'DejaVu Sans',sans-serif;font-size:5.8px;color:#c0c0c0;letter-spacing:.3px;transform:scaleX(1.5);transform-origin:0 0;transform:scaleX(1.36)">SOLO</div><div class="t" style="left:166px;top:359.2px;font-family:'DejaVu Sans',sans-serif;font-size:5.8px;color:#c0c0c0;letter-spacing:.3px;transform:scaleX(1.5);transform-origin:0 0;transform:scaleX(1.2)">ENV</div><div class="t" style="left:197.6px;top:358.8px;font-family:'DejaVu Sans',sans-serif;font-size:5.8px;color:#c0c0c0;letter-spacing:.3px;transform:scaleX(1.5);transform-origin:0 0;font-size:6.6px;transform:scaleX(1.32)">INSERT</div><div class="a" style="left:166px;top:354px;width:16px;height:1px;background:#8a9098"></div><div class="a" style="left:182px;top:354px;width:7px;height:1px;border-top:1px dotted #999"></div><div class="a" style="left:166px;top:368px;width:16px;height:1px;background:#8a9098"></div><div class="a" style="left:182px;top:368px;width:7px;height:1px;border-top:1px dotted #999"></div><div class="a" style="left:198px;top:354px;width:24px;height:1px;background:#777"></div><div class="a" style="left:221px;top:353px;width:3px;height:3px;background:#d06060;border-radius:2px"></div><div class="a" style="left:230px;top:353px;width:3px;height:3px;background:#d06060;border-radius:2px"></div><div class="a" style="left:233px;top:352px;width:16px;height:3px;border-bottom:1px solid #777;border-right:1px solid #777"></div><div class="a" style="left:240.9px;top:358px;width:7px;height:7px;border-radius:4px;background:#3c3c3c;border:1px solid #2c2c2c"></div><div class="a" style="left:196px;top:369.5px;width:20.5px;height:18.8px;border-radius:3.5px;border:1px solid #4a5c70;background:#2c2e31"></div><div class="btn" style="left:200px;top:372.7px"><svg style="left:2.6px;top:4px" width="8" height="5"><path d="M0 0h8l-4 4.6z" fill="#111"/></svg></div><div class="a" style="left:223px;top:377.7px;width:5px;height:4.4px;background:#787878"></div><div class="a" style="left:234.1px;top:369.5px;width:20.5px;height:18.8px;border-radius:3.5px;border:1px solid #6a5050;background:#352e2e"></div><div class="btn" style="left:238px;top:372.7px;background:linear-gradient(135deg,#c4b6b6,#a89a9a 60%,#8e8080)"></div><div class="a" style="left:266.7px;top:301.8px;width:46px;height:22px;background:linear-gradient(#4a4c4c 0,#303232 1.2px,#242626 5px,#121414 12px,#060808 20px)"></div><div class="t" style="left:273px;top:304.8px;font-family:'Liberation Sans',sans-serif;font-weight:bold;font-size:10px;color:#9fb4c8;letter-spacing:-.2px">11</div><div class="t" style="left:303px;top:306px;font-size:8.5px;color:#2aa0b0;font-family:'DejaVu Sans',sans-serif">G</div><div class="a" style="left:271px;top:317px;width:41px;height:1px;background:#2a8a7a"></div><div class="t" style="left:295px;top:321px;font-family:'Liberation Sans',sans-serif;font-weight:bold;font-size:10px;color:#9fb0c4">0.00</div><div class="a" style="left:271px;top:332px;width:41px;height:1px;background:#6a6a30"></div><div class="a" style="left:272px;top:341px;width:5px;height:5px;background:#3cb371"></div><div class="t" style="left:285px;top:340.5px;font-family:'DejaVu Sans',sans-serif;font-size:7px;letter-spacing:.1px;transform:scaleX(1.3);transform-origin:0 0;color:#2cb468;font-weight:bold">MAST</div><div class="a" style="left:272px;top:352px;width:5px;height:5px;background:#3a3a3a"></div><div class="t" style="left:305px;top:351.5px;font-family:'DejaVu Sans',sans-serif;font-size:7px;letter-spacing:.1px;transform:scaleX(1.3);transform-origin:0 0;color:#333">A</div><div class="a" style="left:272px;top:362px;width:5px;height:5px;background:#2e2e2e"></div><div class="t" style="left:286px;top:361.5px;font-family:'DejaVu Sans',sans-serif;font-size:7px;letter-spacing:.1px;transform:scaleX(1.3);transform-origin:0 0;color:#2c2c2c;letter-spacing:.5px">RETU</div><div class="a" style="left:271px;top:380.1px;width:41px;height:2.9px;background:#3c3e3e"></div><div class="a" style="left:2px;top:431px;width:19px;height:127px;background:linear-gradient(#1e1f1f 0,#171818 25%,#0d0e0e 70%,#0b0c0c 100%);box-shadow:inset 0 0 0 1px #1f3a52"></div><svg style="left:5.8px;top:436.4px" width="10.4" height="7.6" viewBox="0 0 12 10" preserveAspectRatio="none"><path d="M0 1.5 a1 1 0 0 1 1-1 h3.5 l1.2 1.5 h5.3 a1 1 0 0 1 1 1 v6 a1 1 0 0 1-1 1 h-10 a1 1 0 0 1-1-1z" fill="#3b3b3b"/></svg><div class="a" style="left:22px;top:431px;width:241px;height:127px;background:linear-gradient(#535353,#4c4c4c);border-top:1px solid #4a7fb0;border-bottom:1px solid #4a7fb0;border-left:1px solid #585858;border-right:1px solid #3a3a3a"></div><div class="a" style="left:29px;top:432px;width:119px;height:16px;background:#0d0d0d;border-bottom:1px solid #666;border-right:1px solid #666"></div><div class="a" style="left:33px;top:436px;width:6px;height:6px;background:#6b7a6b"></div><div class="t" style="left:45px;top:434px;font-family:'DejaVu Sans',sans-serif;font-weight:bold;font-size:10.5px;color:#d2d2d2;letter-spacing:0.78px;width:99px;overflow:hidden">HIGH GAIN SHA</div><svg style="left:24px;top:446.3px" width="46" height="46" viewBox="-23 -23 46 46"><path d="M-12.41 11.17 A16.7 16.7 0 0 1 -4.88 -15.97 M4.88 -15.97 A16.7 16.7 0 0 1 12.41 11.17" fill="none" stroke="#54707f" stroke-width="1.8"/><rect x="-.9" y="-17.8" width="1.8" height="3.6" fill="#9a9a9a"/><circle cy="1" r="14.6" fill="#262626"/><circle r="13.8" fill="#1b1b1b"/><circle cx="0.0" cy="-13.6" r="1.1" fill="#3a3a3a"/><circle cx="6.8" cy="-11.8" r="1.1" fill="#3a3a3a"/><circle cx="11.8" cy="-6.8" r="1.1" fill="#3a3a3a"/><circle cx="13.6" cy="-0.0" r="1.1" fill="#3a3a3a"/><circle cx="11.8" cy="6.8" r="1.1" fill="#3a3a3a"/><circle cx="6.8" cy="11.8" r="1.1" fill="#3a3a3a"/><circle cx="0.0" cy="13.6" r="1.1" fill="#3a3a3a"/><circle cx="-6.8" cy="11.8" r="1.1" fill="#3a3a3a"/><circle cx="-11.8" cy="6.8" r="1.1" fill="#3a3a3a"/><circle cx="-13.6" cy="0.0" r="1.1" fill="#3a3a3a"/><circle cx="-11.8" cy="-6.8" r="1.1" fill="#3a3a3a"/><circle cx="-6.8" cy="-11.8" r="1.1" fill="#3a3a3a"/><circle r="12.6" fill="#202020"/><circle r="10.6" fill="url(#kg)"/><rect x="-1" y="-8.4" width="2" height="9" fill="#f4f4f4"/><circle cx="-14.1" cy="14.1" r=".8" fill="#8c8c8c"/><circle cx="-20.0" cy="-0.0" r=".8" fill="#8c8c8c"/><circle cx="-14.1" cy="-14.1" r=".8" fill="#8c8c8c"/><circle cx="14.1" cy="-14.1" r=".8" fill="#8c8c8c"/><circle cx="20.0" cy="-0.0" r=".8" fill="#8c8c8c"/><circle cx="14.1" cy="14.1" r=".8" fill="#8c8c8c"/></svg><svg style="left:77px;top:446.3px" width="46" height="46" viewBox="-23 -23 46 46"><path d="M-12.41 11.17 A16.7 16.7 0 0 1 -4.88 -15.97 M4.88 -15.97 A16.7 16.7 0 0 1 12.41 11.17" fill="none" stroke="#96604a" stroke-width="1.8"/><rect x="-.9" y="-17.8" width="1.8" height="3.6" fill="#9a9a9a"/><circle cy="1" r="14.6" fill="#262626"/><circle r="13.8" fill="#1b1b1b"/><circle cx="0.0" cy="-13.6" r="1.1" fill="#3a3a3a"/><circle cx="6.8" cy="-11.8" r="1.1" fill="#3a3a3a"/><circle cx="11.8" cy="-6.8" r="1.1" fill="#3a3a3a"/><circle cx="13.6" cy="-0.0" r="1.1" fill="#3a3a3a"/><circle cx="11.8" cy="6.8" r="1.1" fill="#3a3a3a"/><circle cx="6.8" cy="11.8" r="1.1" fill="#3a3a3a"/><circle cx="0.0" cy="13.6" r="1.1" fill="#3a3a3a"/><circle cx="-6.8" cy="11.8" r="1.1" fill="#3a3a3a"/><circle cx="-11.8" cy="6.8" r="1.1" fill="#3a3a3a"/><circle cx="-13.6" cy="0.0" r="1.1" fill="#3a3a3a"/><circle cx="-11.8" cy="-6.8" r="1.1" fill="#3a3a3a"/><circle cx="-6.8" cy="-11.8" r="1.1" fill="#3a3a3a"/><circle r="12.6" fill="#202020"/><circle r="10.6" fill="url(#kg)"/><rect x="-1" y="-8.4" width="2" height="9" fill="#f4f4f4"/><circle cx="-14.1" cy="14.1" r=".8" fill="#8c8c8c"/><circle cx="-20.0" cy="-0.0" r=".8" fill="#8c8c8c"/><circle cx="-14.1" cy="-14.1" r=".8" fill="#8c8c8c"/><circle cx="14.1" cy="-14.1" r=".8" fill="#8c8c8c"/><circle cx="20.0" cy="-0.0" r=".8" fill="#8c8c8c"/><circle cx="14.1" cy="14.1" r=".8" fill="#8c8c8c"/></svg><div class="a" style="left:72px;top:455px;width:1px;height:36.5px;background:#303030"></div><div class="t" style="left:31px;top:485.6px;font-family:'DejaVu Sans',sans-serif;font-size:6.8px;color:#b8b8b8;font-size:9px;color:#c0c0c0">-</div><div class="t" style="left:41px;top:489.6px;font-family:'DejaVu Sans',sans-serif;font-size:6.8px;color:#b8b8b8;letter-spacing:1px">Vol</div><div class="t" style="left:59px;top:486px;font-family:'DejaVu Sans',sans-serif;font-size:6.8px;color:#b8b8b8;font-size:8.5px">+</div><div class="t" style="left:82px;top:487.4px;font-family:'DejaVu Sans',sans-serif;font-size:6.8px;color:#b8b8b8;font-size:6.6px">L</div><div class="t" style="left:92px;top:489.6px;font-family:'DejaVu Sans',sans-serif;font-size:6.8px;color:#b8b8b8;letter-spacing:1px">Pan</div><div class="t" style="left:115px;top:487.4px;font-family:'DejaVu Sans',sans-serif;font-size:6.8px;color:#b8b8b8;font-size:6.6px">R</div><div class="a" style="left:29px;top:498px;width:94px;height:16px;background:#6f6f6f;border:1px solid #2a2a2a;border-top-color:#222"></div><div class="t" style="left:33.5px;top:501.3px;font-size:10.5px;color:#000;letter-spacing:-.1px;-webkit-text-stroke:.25px #000">Left</div><div class="a" style="left:112px;top:503px;width:6px;height:6px;background:#4a4a4a"></div><div class="btn" style="left:167px;top:435.9px;"></div><div class="btn" style="left:200px;top:435.9px;"></div><div class="btn" style="left:238px;top:435.9px;background:radial-gradient(#ffe27a,#e0b030);box-shadow:0 0 0 1px #2a2a2a,0 0 4px #c9a030"></div><div class="btn" style="left:167px;top:464px"></div><div class="btn" style="left:200px;top:464px;background:radial-gradient(#8affd4 0,#5aeab0 40%,#28b878 100%);box-shadow:0 0 0 1px #2a2a2a,0 0 4px #2a9"></div><div class="btn" style="left:238px;top:464px"><div class="a" style="left:2.2px;top:4.9px;width:9px;height:2px;background:#111"></div></div><div class="t" style="left:169.5px;top:451.6px;font-size:9px;color:#d8d8d8;font-style:italic">Ø</div><div class="t" style="left:196.6px;top:453.8px;font-family:'DejaVu Sans',sans-serif;font-size:5.8px;color:#c0c0c0;letter-spacing:.3px;transform:scaleX(1.5);transform-origin:0 0;transform:scaleX(1.38)">MUTE</div><div class="t" style="left:234.7px;top:453.8px;font-family:'DejaVu Sans',sans-serif;font-size:5.8px;color:#c0c0c0;letter-spacing:.3px;transform:scaleX(1.5);transform-origin:0 0;transform:scaleX(1.36)">SOLO</div><div class="t" style="left:166px;top:488.2px;font-family:'DejaVu Sans',sans-serif;font-size:5.8px;color:#c0c0c0;letter-spacing:.3px;transform:scaleX(1.5);transform-origin:0 0;transform:scaleX(1.2)">ENV</div><div class="t" style="left:197.6px;top:487.8px;font-family:'DejaVu Sans',sans-serif;font-size:5.8px;color:#c0c0c0;letter-spacing:.3px;transform:scaleX(1.5);transform-origin:0 0;font-size:6.6px;transform:scaleX(1.32)">INSERT</div><div class="a" style="left:166px;top:483px;width:16px;height:1px;background:#8a9098"></div><div class="a" style="left:182px;top:483px;width:7px;height:1px;border-top:1px dotted #999"></div><div class="a" style="left:166px;top:497px;width:16px;height:1px;background:#8a9098"></div><div class="a" style="left:182px;top:497px;width:7px;height:1px;border-top:1px dotted #999"></div><div class="a" style="left:198px;top:483px;width:24px;height:1px;background:#777"></div><div class="a" style="left:221px;top:482px;width:3px;height:3px;background:#d06060;border-radius:2px"></div><div class="a" style="left:230px;top:482px;width:3px;height:3px;background:#d06060;border-radius:2px"></div><div class="a" style="left:233px;top:481px;width:16px;height:3px;border-bottom:1px solid #777;border-right:1px solid #777"></div><div class="a" style="left:240.9px;top:487px;width:7px;height:7px;border-radius:4px;background:#3c3c3c;border:1px solid #2c2c2c"></div><div class="a" style="left:196px;top:498.5px;width:20.5px;height:18.8px;border-radius:3.5px;border:1px solid #4a5c70;background:#2c2e31"></div><div class="btn" style="left:200px;top:501.7px"><svg style="left:2.6px;top:4px" width="8" height="5"><path d="M0 0h8l-4 4.6z" fill="#111"/></svg></div><div class="a" style="left:223px;top:506.7px;width:5px;height:4.4px;background:#787878"></div><div class="a" style="left:234.1px;top:498.5px;width:20.5px;height:18.8px;border-radius:3.5px;border:1px solid #6a5050;background:#352e2e"></div><div class="btn" style="left:238px;top:501.7px;background:linear-gradient(135deg,#c4b6b6,#a89a9a 60%,#8e8080)"></div><div class="a" style="left:266.7px;top:430.8px;width:46px;height:22px;background:linear-gradient(#4a4c4c 0,#303232 1.2px,#242626 5px,#121414 12px,#060808 20px)"></div><div class="t" style="left:273px;top:433.8px;font-family:'Liberation Sans',sans-serif;font-weight:bold;font-size:10px;color:#9fb4c8;letter-spacing:-.2px">12</div><div class="t" style="left:303px;top:435px;font-size:8.5px;color:#2aa0b0;font-family:'DejaVu Sans',sans-serif">G</div><div class="a" style="left:271px;top:446px;width:41px;height:1px;background:#2a8a7a"></div><div class="t" style="left:295px;top:450px;font-family:'Liberation Sans',sans-serif;font-weight:bold;font-size:10px;color:#9fb0c4">0.00</div><div class="a" style="left:271px;top:461px;width:41px;height:1px;background:#6a6a30"></div><div class="a" style="left:272px;top:470px;width:5px;height:5px;background:#3cb371"></div><div class="t" style="left:285px;top:469.5px;font-family:'DejaVu Sans',sans-serif;font-size:7px;letter-spacing:.1px;transform:scaleX(1.3);transform-origin:0 0;color:#2cb468;font-weight:bold">MAST</div><div class="a" style="left:272px;top:481px;width:5px;height:5px;background:#3a3a3a"></div><div class="t" style="left:305px;top:480.5px;font-family:'DejaVu Sans',sans-serif;font-size:7px;letter-spacing:.1px;transform:scaleX(1.3);transform-origin:0 0;color:#333">A</div><div class="a" style="left:272px;top:491px;width:5px;height:5px;background:#2e2e2e"></div><div class="t" style="left:286px;top:490.5px;font-family:'DejaVu Sans',sans-serif;font-size:7px;letter-spacing:.1px;transform:scaleX(1.3);transform-origin:0 0;color:#2c2c2c;letter-spacing:.5px">RETU</div><div class="a" style="left:271px;top:509.1px;width:41px;height:2.9px;background:#3c3e3e"></div><div class="a" style="left:0;top:560px;width:312px;height:80px;background:#1e1e1e"></div><div class="a" style="left:0;top:560px;width:2px;height:80px;background:#000"></div><div class="a" style="left:0;top:638px;width:312px;height:20px;background:#262626;border-top:1px solid #555;border-bottom:1px solid #111"></div><div class="t" style="left:7px;top:642px;font-size:10px;font-weight:bold;color:#c4c9d0;transform:scaleX(.93);transform-origin:0 0">Select time</div><div class="a" style="left:0;top:658px;width:312px;height:70px;background:#000"></div><div class="a" style="left:2px;top:659px;width:310px;height:66px;background:#262626;border-top:1px solid #444;border-left:1px solid #3a3a3a"></div><div class="t" style="left:26.5px;top:667px;font-family:'Liberation Sans',sans-serif;color:#b8b8b8;letter-spacing:.8px;font-size:8px;letter-spacing:-.3px">SOLARIS&nbsp; PRO</div><div class="a" style="left:12px;top:682px;width:85px;height:1px;background:#999"></div><div class="a" style="left:13px;top:689.5px;width:82px;height:17px;background:#0a0a0a;border:1px solid #3a3a3a;border-radius:2px"></div><div class="a" style="left:15px;top:691px;width:12px;height:12px;background:linear-gradient(135deg,#aaa,#777)"></div><div class="t" style="left:48px;top:693px;font-family:'Liberation Mono',monospace;font-size:9px;color:#5a6a78;letter-spacing:1.5px">none</div><div class="t" style="left:12px;top:710.5px;font-family:'Liberation Sans',sans-serif;color:#b8b8b8;letter-spacing:.8px;font-size:6.5px;letter-spacing:.27px">AUTOMATION OVERRIDE</div><div class="a" style="left:144px;top:666.7px;width:9px;height:9px;border-radius:5px;background:radial-gradient(circle at 45% 35%,#239060 0,#0c5c3a 45%,#053824 100%);border:1px solid #0a0a0a;box-shadow:0 1px 0 #666"></div><div class="a" style="left:155.8px;top:670.7px;width:5px;height:1px;background:#777"></div><div class="t" style="left:163.7px;top:668px;font-family:'Liberation Sans',sans-serif;color:#b8b8b8;letter-spacing:.8px;font-size:6.8px;font-weight:bold;letter-spacing:.22px">PREV / NEXT</div><div class="a" style="left:144px;top:683px;width:30.8px;height:31px;background:linear-gradient(135deg,#b4b4b4,#8a8a8a 50%,#a8a8a8);box-shadow:0 0 0 1px #151515,0 3px 4px 1px #141414"></div><div class="a" style="left:146.5px;top:685.5px;width:25.8px;height:26px;background:radial-gradient(ellipse at 50% 45%,#2a2a2a 0,#1c1c1c 70%,#141414 100%);box-shadow:inset 0 0 2px 1px #0c0c0c"><svg style="left:-2.5px;top:-2.5px" width="31" height="31"><path d="M19 10.5 L9.2 15.5 L19 20.5z" fill="none" stroke="#dadada" stroke-width="1.3"/></svg></div><div class="a" style="left:177px;top:683px;width:30.8px;height:31px;background:linear-gradient(135deg,#b4b4b4,#8a8a8a 50%,#a8a8a8);box-shadow:0 0 0 1px #151515,0 3px 4px 1px #141414"></div><div class="a" style="left:179.5px;top:685.5px;width:25.8px;height:26px;background:radial-gradient(ellipse at 50% 45%,#2a2a2a 0,#1c1c1c 70%,#141414 100%);box-shadow:inset 0 0 2px 1px #0c0c0c"><svg style="left:-2.5px;top:-2.5px" width="31" height="31"><path d="M12 10.5 L21.8 15.5 L12 20.5z" fill="none" stroke="#dadada" stroke-width="1.3"/></svg></div><div class="t" style="left:238px;width:21px;top:686.8px;font-family:'Liberation Sans',sans-serif;color:#b8b8b8;letter-spacing:.8px;font-size:6.5px;font-weight:bold;letter-spacing:.35px;line-height:7px;text-align:center">TIME<br>CODE</div><div class="a" style="left:248px;top:680px;width:12px;height:4px;border-top:1px solid #6a6a6a;border-left:1px solid #6a6a6a"></div><div class="a" style="left:243.9px;top:702.9px;width:9px;height:9px;border-radius:5px;background:radial-gradient(circle at 45% 35%,#239060 0,#0c5c3a 45%,#053824 100%);border:1px solid #0a0a0a;box-shadow:0 1px 0 #666"></div><div class="a" style="left:267px;top:668.3px;width:44px;height:45.7px;background:linear-gradient(135deg,#c4c2b8,#9a988e 50%,#b8b6ac);box-shadow:0 0 4px 2px rgba(200,120,14,.7),0 0 1.5px 1px #c8841c"></div><div class="a" style="left:269.5px;top:670.8px;width:39px;height:40.7px;background:radial-gradient(ellipse at 50% 50%,#fffbe0 0%,#fff2c4 45%,#ffe29c 75%,#f2b45c 100%)"></div><div class="t" style="left:275.5px;top:686.2px;font-size:10.6px;color:#3c3020;letter-spacing:.75px;-webkit-text-stroke:.2px #3c3020">PLAY</div><div class="a" style="left:311px;top:0;width:1055px;height:724px;background:#f0f0f0;border-left:2px solid #e2e2e2;box-shadow:-1px 0 2px rgba(0,0,0,.35)"></div><div class="a" style="left:313px;top:0;width:1053px;height:52.3px;background:#fff"></div><div class="a" style="left:311px;top:0;width:1055px;height:3px;background:linear-gradient(#e0e0e0,#f2f2f2)"></div><div class="a" style="left:311px;top:722px;width:1055px;height:1px;background:#fff"></div><div class="a" style="left:311px;top:723px;width:1055px;height:5px;background:#0c0c0c"></div><div class="t" style="left:319px;top:13px;font-size:11.5px;color:#999;letter-spacing:-.2px">FX: Track 12 "HIGH GAIN SHAPE UP"</div><div class="a" style="left:1349px;top:11px;width:17px;height:18.8px;background:#e5e5e5"></div><svg style="left:0;top:0" width="1366" height="32" viewBox="0 0 1366 32"><path d="M1332.9 12.4 H1340.4 L1341.6 13.5 L1339.9 14.7 V18 L1343.5 20.5 L1342.8 21.3 H1337.8 V26.4 L1336.5 27.8 L1335.3 26.4 V21.3 H1330.3 L1329.6 20.5 L1333.1 18 V14.7 L1331.6 13.5 Z" fill="#fff" stroke="#8c8c8c" stroke-width="1" stroke-linejoin="round"/><path d="M1337.5 14.4 V18.6" stroke="#8c8c8c" stroke-width="1.1"/><path d="M1356.2 18.2 L1361 23 M1361 18.2 L1356.2 23" stroke="#fff" stroke-width="1.5"/></svg><div class="t" style="left:319px;top:38px;font-size:12px;color:#4a4a4a;letter-spacing:-.3px">FX</div><div class="t" style="left:345px;top:38px;font-size:12px;color:#4a4a4a;letter-spacing:-.3px">Edit</div><div class="t" style="left:379px;top:38px;font-size:12px;color:#4a4a4a;letter-spacing:-.3px">Options</div><div class="a" style="left:314px;top:56px;width:198px;height:619px;background:#fff;border:1px solid #828790"></div><div class="a" style="left:339px;top:58.3px;width:171px;height:16.3px;background:#f0f0f0"></div><div class="a" style="left:322px;top:59.5px;width:12.5px;height:12.5px;background:#fff;border:1px solid #222;box-shadow:inset 0 0 0 .5px #888"></div><svg style="left:322.7px;top:60.2px" width="11" height="11" viewBox="0 0 11 11"><path d="M2 5.2 L4.3 7.8 L9 2.5" fill="none" stroke="#000" stroke-width="2.1"/></svg><div class="t" style="left:341px;top:62px;font-size:11px;color:#000"><span style="display:inline-block;white-space:pre;width:27px">VST: </span><span style="display:inline-block;white-space:pre;width:25px">TR5 </span><span style="display:inline-block;white-space:pre;width:42.7px;letter-spacing:-.5px">Metering </span><span style="display:inline-block;white-space:pre;width:17.3px;letter-spacing:-.15px">(IK </span><span style="display:inline-block;white-space:pre;letter-spacing:-.46px">Multimedia)</span></div><div class="wbtn" style="left:315px;top:679px;width:43px;height:21px;line-height:19px;letter-spacing:-.4px">Add</div><div class="wbtn" style="left:363px;top:679px;width:48px;height:21px;line-height:19px;letter-spacing:-.3px">Remove</div><div class="t" style="left:314px;top:705px;font-size:11px;color:#000;letter-spacing:-.16px">0.8%/0.8% CPU 0/0 spls</div><div class="a" style="left:518px;top:56.4px;width:826px;height:20.3px;background:#fff;border:1px solid #7a7a7a"></div><div class="wbtn" style="left:1349px;top:56.4px;width:17px;height:20.3px;line-height:17px;text-align:left;padding-left:4px;border-right:0">...</div><div class="wbtn" style="left:519px;top:82px;width:611px;height:21px;line-height:19px;text-align:left;padding-left:4px;letter-spacing:-.22px">No preset</div><svg style="left:1116px;top:89px" width="10" height="7" viewBox="0 0 10 7"><path d="M1 1 L5 5 L9 1" fill="none" stroke="#444" stroke-width="1.1"/></svg><div class="wbtn" style="left:1135px;top:83px;width:16px;height:19px;line-height:17px">+</div><div class="wbtn" style="left:1156px;top:83px;width:43px;height:19px;line-height:17px;letter-spacing:-.55px">Param</div><div class="wbtn" style="left:1204px;top:83px;width:73px;height:19px;line-height:17px;letter-spacing:-.23px">2 in 2 out</div><div class="wbtn" style="left:1282px;top:83px;width:24px;height:19px;line-height:17px">UI</div><div class="a" style="left:1313px;top:85.5px;width:15px;height:15px;border-radius:8px;background:linear-gradient(135deg,#fafafa,#c8c8c8 55%,#8a8a8a);border:1px solid #8a8a8a;box-shadow:1px 1px 1.5px rgba(0,0,0,.35)"></div><div class="a" style="left:1321px;top:93px;width:1.1px;height:6px;background:#222;transform:rotate(-22deg);transform-origin:0 0"></div><div class="a" style="left:1332px;top:85.2px;width:12.8px;height:12.6px;background:#fff;border:1px solid #222"></div><svg style="left:1332px;top:85px" width="13" height="13" viewBox="0 0 13 13"><path d="M1.8 6.4 L4.9 9.5 L10.9 3.2" fill="none" stroke="#222" stroke-width="1.3"/></svg><div class="a" style="left:1351px;top:80px;width:15px;height:642px;background:#272727"></div><div class="a" style="left:1354px;top:98.4px;width:11px;height:533.6px;background:#5b5b5b;border-radius:5px"></div><svg style="left:1352.8px;top:82px" width="13" height="13" viewBox="0 0 13 13"><circle cx="6.5" cy="6.5" r="6.2" fill="#0c0c0c"/><circle cx="6.5" cy="6.5" r="5.5" fill="url(#sbg)"/><path d="M3.8 8.2 L6.5 3.6 L9.2 8.2z" fill="#1c1c1c"/></svg><svg style="left:1352.8px;top:706.5px" width="13" height="13" viewBox="0 0 13 13"><circle cx="6.5" cy="6.5" r="6.2" fill="#0c0c0c"/><circle cx="6.5" cy="6.5" r="5.5" fill="url(#sbg)"/><path d="M3.8 5 L6.5 9.4 L9.2 5z" fill="#1c1c1c"/></svg><svg width="0" height="0"><defs><linearGradient id="sbg" x1="0" y1="0" x2="0" y2="1"><stop offset="0" stop-color="#b4b4b4"/><stop offset=".55" stop-color="#8a8a8a"/><stop offset="1" stop-color="#6a6a6a"/></linearGradient></defs></svg><div class="a" style="left:518px;top:107px;width:834px;height:615px;background:#2a2a2a"></div><div class="a" style="left:518px;top:107px;width:294px;height:392px;background:#202020"></div><svg style="left:537px;top:112.5px" width="18" height="18" viewBox="-9 -9 18 18"><circle r="4.7" fill="none" stroke="#8c8c8c" stroke-width="2.5"/><rect x="-1" y="-7.5" width="2" height="2.4" transform="rotate(0)" fill="#8c8c8c"/><rect x="-1" y="-7.5" width="2" height="2.4" transform="rotate(30)" fill="#8c8c8c"/><rect x="-1" y="-7.5" width="2" height="2.4" transform="rotate(60)" fill="#8c8c8c"/><rect x="-1" y="-7.5" width="2" height="2.4" transform="rotate(90)" fill="#8c8c8c"/><rect x="-1" y="-7.5" width="2" height="2.4" transform="rotate(120)" fill="#8c8c8c"/><rect x="-1" y="-7.5" width="2" height="2.4" transform="rotate(150)" fill="#8c8c8c"/><rect x="-1" y="-7.5" width="2" height="2.4" transform="rotate(180)" fill="#8c8c8c"/><rect x="-1" y="-7.5" width="2" height="2.4" transform="rotate(210)" fill="#8c8c8c"/><rect x="-1" y="-7.5" width="2" height="2.4" transform="rotate(240)" fill="#8c8c8c"/><rect x="-1" y="-7.5" width="2" height="2.4" transform="rotate(270)" fill="#8c8c8c"/><rect x="-1" y="-7.5" width="2" height="2.4" transform="rotate(300)" fill="#8c8c8c"/><rect x="-1" y="-7.5" width="2" height="2.4" transform="rotate(330)" fill="#8c8c8c"/></svg><svg style="left:784px;top:113px" width="18" height="18" viewBox="-9 -9 18 18"><path d="M-3.6 -5.4 A6.5 6.5 0 1 0 3.6 -5.4" fill="none" stroke="#f0b020" stroke-width="1.4"/><path d="M0 -7.4 V-.8" stroke="#f0b020" stroke-width="2"/></svg><div class="a" style="left:549px;top:162px;width:16px;height:286px;background:repeating-linear-gradient(#111 0,#111 3.3px,#1a1a1a 3.3px,#1a1a1a 4.3px)"></div><div class="a" style="left:549px;top:291.5px;width:16px;height:156.5px;background:linear-gradient(#0a5cff 0,#0a66f8 20%,#1070e0 40%,#1a78cc 46%,#2a9ad8 47.5%,#2aa0dc 100%)"></div><div class="a" style="left:549px;top:291.5px;width:16px;height:156.5px;background:repeating-linear-gradient(rgba(0,0,0,0) 0,rgba(0,0,0,0) 3.3px,rgba(0,20,60,.45) 3.3px,rgba(0,20,60,.45) 4.3px)"></div><div class="a" style="left:549px;top:247px;width:16px;height:2px;background:#12d8ec"></div><div class="a" style="left:581px;top:162px;width:16px;height:286px;background:repeating-linear-gradient(#111 0,#111 3.3px,#1a1a1a 3.3px,#1a1a1a 4.3px)"></div><div class="a" style="left:581px;top:291.5px;width:16px;height:156.5px;background:linear-gradient(#0a5cff 0,#0a66f8 20%,#1070e0 40%,#1a78cc 46%,#2a9ad8 47.5%,#2aa0dc 100%)"></div><div class="a" style="left:581px;top:291.5px;width:16px;height:156.5px;background:repeating-linear-gradient(rgba(0,0,0,0) 0,rgba(0,0,0,0) 3.3px,rgba(0,20,60,.45) 3.3px,rgba(0,20,60,.45) 4.3px)"></div><div class="a" style="left:581px;top:247px;width:16px;height:2px;background:#12d8ec"></div><div class="a" style="left:568px;top:172.4px;width:10px;height:1px;background:#555"></div><div class="a" style="left:600px;top:172.4px;width:8px;height:1px;background:#666"></div><div class="t" style="left:610px;top:168.1px;font-size:9.3px;color:#a4a4a4">0</div><div class="a" style="left:568px;top:181.1px;width:10px;height:1px;background:#555"></div><div class="a" style="left:600px;top:181.1px;width:8px;height:1px;background:#666"></div><div class="a" style="left:568px;top:189.7px;width:10px;height:1px;background:#555"></div><div class="a" style="left:600px;top:189.7px;width:8px;height:1px;background:#666"></div><div class="a" style="left:568px;top:198.4px;width:10px;height:1px;background:#555"></div><div class="a" style="left:600px;top:198.4px;width:8px;height:1px;background:#666"></div><div class="a" style="left:568px;top:207.0px;width:10px;height:1px;background:#555"></div><div class="a" style="left:600px;top:207.0px;width:8px;height:1px;background:#666"></div><div class="a" style="left:568px;top:215.7px;width:10px;height:1px;background:#555"></div><div class="a" style="left:600px;top:215.7px;width:8px;height:1px;background:#666"></div><div class="t" style="left:610px;top:211.4px;font-size:9.3px;color:#a4a4a4">-6</div><div class="a" style="left:568px;top:224.4px;width:10px;height:1px;background:#555"></div><div class="a" style="left:600px;top:224.4px;width:8px;height:1px;background:#666"></div><div class="a" style="left:568px;top:233.0px;width:10px;height:1px;background:#555"></div><div class="a" style="left:600px;top:233.0px;width:8px;height:1px;background:#666"></div><div class="a" style="left:568px;top:241.7px;width:10px;height:1px;background:#555"></div><div class="a" style="left:600px;top:241.7px;width:8px;height:1px;background:#666"></div><div class="a" style="left:568px;top:250.3px;width:10px;height:1px;background:#555"></div><div class="a" style="left:600px;top:250.3px;width:8px;height:1px;background:#666"></div><div class="a" style="left:568px;top:259.0px;width:10px;height:1px;background:#555"></div><div class="a" style="left:600px;top:259.0px;width:8px;height:1px;background:#666"></div><div class="t" style="left:610px;top:254.7px;font-size:9.3px;color:#a4a4a4">-8</div><div class="a" style="left:568px;top:267.7px;width:10px;height:1px;background:#555"></div><div class="a" style="left:600px;top:267.7px;width:8px;height:1px;background:#666"></div><div class="a" style="left:568px;top:276.3px;width:10px;height:1px;background:#555"></div><div class="a" style="left:600px;top:276.3px;width:8px;height:1px;background:#666"></div><div class="a" style="left:568px;top:285.0px;width:10px;height:1px;background:#555"></div><div class="a" style="left:600px;top:285.0px;width:8px;height:1px;background:#666"></div><div class="a" style="left:568px;top:293.6px;width:10px;height:1px;background:#555"></div><div class="a" style="left:600px;top:293.6px;width:8px;height:1px;background:#666"></div><div class="a" style="left:568px;top:302.3px;width:10px;height:1px;background:#555"></div><div class="a" style="left:600px;top:302.3px;width:8px;height:1px;background:#666"></div><div class="t" style="left:610px;top:298.0px;font-size:9.3px;color:#a4a4a4">-10</div><div class="a" style="left:568px;top:326.5px;width:10px;height:1px;background:#555"></div><div class="a" style="left:600px;top:326.5px;width:8px;height:1px;background:#666"></div><div class="t" style="left:610px;top:322.2px;font-size:9.3px;color:#a4a4a4">-12</div><div class="a" style="left:568px;top:349.9px;width:10px;height:1px;background:#555"></div><div class="a" style="left:600px;top:349.9px;width:8px;height:1px;background:#666"></div><div class="t" style="left:610px;top:345.6px;font-size:9.3px;color:#a4a4a4">-14</div><div class="a" style="left:568px;top:373.5px;width:10px;height:1px;background:#555"></div><div class="a" style="left:600px;top:373.5px;width:8px;height:1px;background:#666"></div><div class="t" style="left:610px;top:369.2px;font-size:9.3px;color:#a4a4a4">-20</div><div class="a" style="left:568px;top:397.5px;width:10px;height:1px;background:#555"></div><div class="a" style="left:600px;top:397.5px;width:8px;height:1px;background:#666"></div><div class="t" style="left:610px;top:393.2px;font-size:9.3px;color:#a4a4a4">-30</div><div class="a" style="left:568px;top:425.5px;width:10px;height:1px;background:#555"></div><div class="a" style="left:600px;top:425.5px;width:8px;height:1px;background:#666"></div><div class="t" style="left:610px;top:421.2px;font-size:9.3px;color:#a4a4a4">-40</div><div class="a" style="left:568px;top:438.0px;width:10px;height:1px;background:#555"></div><div class="a" style="left:600px;top:438.0px;width:8px;height:1px;background:#666"></div><div class="t" style="left:610px;top:433.7px;font-size:9.3px;color:#a4a4a4">-50</div><div class="a" style="left:632px;top:154px;width:77px;height:45.5px;border:1px solid #484848"></div><div class="t" style="right:660px;top:158px;font-size:8.5px;color:#8c8c8c">PEAK</div><div class="t" style="right:665.2px;top:172.4px;font-size:24px;color:#f2b62a;letter-spacing:0.5px;-webkit-text-stroke:.45px #202020"><span style="display:inline-block;transform:translateY(-1px) scaleX(1.45);transform-origin:100% 50%;margin-right:-1.8px">-</span>7.5</div><div class="a" style="left:632px;top:209px;width:77px;height:45.5px;border:1px solid #484848"></div><div class="t" style="right:660px;top:213px;font-size:8.5px;color:#8c8c8c">RMS</div><div class="t" style="right:667.1500000000001px;top:227.4px;font-size:24px;color:#f2b62a;letter-spacing:-1.45px;-webkit-text-stroke:.45px #202020"><span style="display:inline-block;transform:translateY(-1px) scaleX(1.45);transform-origin:100% 50%;margin-right:0.1px">-</span>18.1</div><div class="a" style="left:632px;top:264px;width:77px;height:45.5px;border:1px solid #484848"></div><div class="t" style="right:660px;top:268px;font-size:8.5px;color:#8c8c8c">LUFS I</div><div class="t" style="right:665.7px;top:282.4px;font-size:24px;color:#f2b62a;letter-spacing:0px;-webkit-text-stroke:.45px #202020"><span style="display:inline-block;transform:translateY(-1px) scaleX(1.45);transform-origin:100% 50%;margin-right:-1.3px">-</span>15.0</div><div class="a" style="left:632px;top:319px;width:77px;height:45.5px;border:1px solid #484848"></div><div class="t" style="right:660px;top:323px;font-size:8.5px;color:#8c8c8c">DR</div><div class="t" style="right:665.2px;top:337.4px;font-size:24px;color:#f2b62a;letter-spacing:0.5px;-webkit-text-stroke:.45px #202020">7.4</div><div class="a" style="left:743px;top:153px;width:16px;height:295px;background:#000"></div><div class="a" style="left:744px;top:287.5px;width:14px;height:160.5px;background:repeating-linear-gradient(#0f4f86 0,#0f4f86 3.3px,#0a3558 3.3px,#0a3558 4.3px)"></div><div class="t" style="right:631px;top:160.9px;font-size:9.3px;color:#a4a4a4">0</div><div class="a" style="left:735.5px;top:165.0px;width:7.5px;height:1px;background:#8a8a8a"></div><div class="t" style="right:631px;top:183.4px;font-size:9.3px;color:#a4a4a4">-1</div><div class="a" style="left:735.5px;top:187.5px;width:7.5px;height:1px;background:#8a8a8a"></div><div class="t" style="right:631px;top:211.4px;font-size:9.3px;color:#a4a4a4">-7</div><div class="a" style="left:735.5px;top:215.5px;width:7.5px;height:1px;background:#8a8a8a"></div><div class="t" style="right:631px;top:238.9px;font-size:9.3px;color:#a4a4a4">-10</div><div class="a" style="left:735.5px;top:243.0px;width:7.5px;height:1px;background:#8a8a8a"></div><div class="t" style="right:631px;top:272.4px;font-size:9.3px;color:#a4a4a4">-13</div><div class="a" style="left:735.5px;top:276.5px;width:7.5px;height:1px;background:#8a8a8a"></div><div class="t" style="right:631px;top:296.4px;font-size:9.3px;color:#a4a4a4">-16</div><div class="a" style="left:735.5px;top:300.5px;width:7.5px;height:1px;background:#8a8a8a"></div><div class="t" style="right:631px;top:321.4px;font-size:9.3px;color:#a4a4a4">-19</div><div class="a" style="left:735.5px;top:325.5px;width:7.5px;height:1px;background:#8a8a8a"></div><div class="t" style="right:631px;top:348.4px;font-size:9.3px;color:#a4a4a4">-22</div><div class="a" style="left:735.5px;top:352.5px;width:7.5px;height:1px;background:#8a8a8a"></div><div class="t" style="right:631px;top:358.4px;font-size:9.3px;color:#f0b428;font-weight:bold">-23</div><div class="a" style="left:735.5px;top:362.5px;width:7.5px;height:1px;background:#f0b428"></div><div class="t" style="right:631px;top:379.9px;font-size:9.3px;color:#a4a4a4">-25</div><div class="a" style="left:735.5px;top:384.0px;width:7.5px;height:1px;background:#8a8a8a"></div><div class="t" style="right:631px;top:411.4px;font-size:9.3px;color:#a4a4a4">-30</div><div class="a" style="left:735.5px;top:415.5px;width:7.5px;height:1px;background:#8a8a8a"></div><div class="t" style="right:631px;top:442.4px;font-size:9.3px;color:#a4a4a4">-36</div><div class="a" style="left:735.5px;top:446.5px;width:7.5px;height:1px;background:#8a8a8a"></div><div class="a" style="left:775px;top:154px;width:14px;height:293px;background:#151515"></div><div class="a" style="left:775px;top:223px;width:14px;height:71px;background:#5b9bd5"></div><div class="t" style="left:537px;width:40px;text-align:center;top:454px;font-size:8.5px;color:#f0b428">-7.5</div><div class="t" style="left:568.5px;width:40px;text-align:center;top:454px;font-size:8.5px;color:#f0b428">-7.5</div><div class="t" style="left:731px;width:40px;text-align:center;top:454px;font-size:8.5px;color:#f0b428">-14.3</div><div class="t" style="left:762px;width:40px;text-align:center;top:454px;font-size:8.5px;color:#f0b428">7.4</div><div class="t" style="left:532px;width:50px;text-align:center;top:470px;font-size:8.5px;font-weight:bold;color:#aaa">L</div><div class="t" style="left:563.5px;width:50px;text-align:center;top:470px;font-size:8.5px;font-weight:bold;color:#aaa">R</div><div class="t" style="left:726px;width:50px;text-align:center;top:470px;font-size:8.5px;font-weight:bold;color:#aaa">LUFS M</div><div class="t" style="left:757px;width:50px;text-align:center;top:470px;font-size:8.5px;font-weight:bold;color:#aaa">DR</div><div class="a" style="left:518px;top:499px;width:294px;height:223px;background:#2d2d2d"></div><svg style="left:537px;top:503.5px" width="18" height="18" viewBox="-9 -9 18 18"><circle r="4.7" fill="none" stroke="#8c8c8c" stroke-width="2.5"/><rect x="-1" y="-7.5" width="2" height="2.4" transform="rotate(0)" fill="#8c8c8c"/><rect x="-1" y="-7.5" width="2" height="2.4" transform="rotate(30)" fill="#8c8c8c"/><rect x="-1" y="-7.5" width="2" height="2.4" transform="rotate(60)" fill="#8c8c8c"/><rect x="-1" y="-7.5" width="2" height="2.4" transform="rotate(90)" fill="#8c8c8c"/><rect x="-1" y="-7.5" width="2" height="2.4" transform="rotate(120)" fill="#8c8c8c"/><rect x="-1" y="-7.5" width="2" height="2.4" transform="rotate(150)" fill="#8c8c8c"/><rect x="-1" y="-7.5" width="2" height="2.4" transform="rotate(180)" fill="#8c8c8c"/><rect x="-1" y="-7.5" width="2" height="2.4" transform="rotate(210)" fill="#8c8c8c"/><rect x="-1" y="-7.5" width="2" height="2.4" transform="rotate(240)" fill="#8c8c8c"/><rect x="-1" y="-7.5" width="2" height="2.4" transform="rotate(270)" fill="#8c8c8c"/><rect x="-1" y="-7.5" width="2" height="2.4" transform="rotate(300)" fill="#8c8c8c"/><rect x="-1" y="-7.5" width="2" height="2.4" transform="rotate(330)" fill="#8c8c8c"/></svg><svg style="left:784px;top:504.5px" width="18" height="18" viewBox="-9 -9 18 18"><path d="M-3.6 -5.4 A6.5 6.5 0 1 0 3.6 -5.4" fill="none" stroke="#f0b020" stroke-width="1.4"/><path d="M0 -7.4 V-.8" stroke="#f0b020" stroke-width="2"/></svg><div class="t" style="left:555.5px;top:535.2px;font-size:10.6px;color:#b0b0b0">L</div><div class="t" style="left:771px;top:536.2px;font-size:10.6px;color:#b0b0b0">R</div><svg style="left:595px;top:517px" width="140" height="140" viewBox="0 0 140 140"><rect x=".5" y=".5" width="139" height="139" fill="#161616" stroke="#5a5a5a"/><path d="M70 .5 L139.5 70 L70 139.5 L.5 70z M.5 70 H139.5 M70 .5 V139.5" fill="none" stroke="#444" stroke-width="1"/><path d="M69.8 20.5 V117" stroke="#e8a820" stroke-width="1.2"/></svg><svg style="left:586.4px;top:666.6px" width="38" height="21" viewBox="0 0 38 21"><path d="M.7 20 A18.3 18.3 0 0 1 37.3 20z" fill="none" stroke="#828282" stroke-width=".9"/><g fill="#7a7a7a"><circle cx="19.1" cy="13.8" r=".45"/><circle cx="17.4" cy="13.5" r=".45"/><circle cx="22.1" cy="13.7" r=".45"/><circle cx="24.3" cy="10.0" r=".45"/><circle cx="19.2" cy="10.5" r=".45"/><circle cx="16.3" cy="12.0" r=".45"/><circle cx="19.8" cy="13.7" r=".45"/><circle cx="20.7" cy="17.5" r=".45"/><circle cx="21.9" cy="8.0" r=".45"/><circle cx="19.7" cy="10.8" r=".45"/><circle cx="17.2" cy="16.2" r=".45"/><circle cx="18.2" cy="7.0" r=".45"/><circle cx="20.1" cy="11.7" r=".45"/><circle cx="15.0" cy="9.9" r=".45"/><circle cx="16.9" cy="12.4" r=".45"/><circle cx="17.5" cy="12.7" r=".45"/><circle cx="25.2" cy="10.3" r=".45"/><circle cx="16.3" cy="11.8" r=".45"/><circle cx="22.7" cy="10.5" r=".45"/><circle cx="23.9" cy="8.8" r=".45"/><circle cx="15.5" cy="12.3" r=".45"/><circle cx="16.1" cy="10.8" r=".45"/><circle cx="20.5" cy="14.5" r=".45"/><circle cx="19.4" cy="11.7" r=".45"/><circle cx="23.6" cy="13.6" r=".45"/><circle cx="18.2" cy="15.9" r=".45"/><circle cx="15.9" cy="13.0" r=".45"/><circle cx="21.2" cy="12.5" r=".45"/><circle cx="17.0" cy="13.5" r=".45"/><circle cx="17.2" cy="10.8" r=".45"/><circle cx="15.5" cy="16.2" r=".45"/><circle cx="17.1" cy="15.7" r=".45"/><circle cx="20.3" cy="11.8" r=".45"/><circle cx="21.3" cy="13.3" r=".45"/><circle cx="19.4" cy="8.6" r=".45"/><circle cx="19.2" cy="15.0" r=".45"/><circle cx="20.7" cy="15.3" r=".45"/><circle cx="24.1" cy="13.7" r=".45"/><circle cx="25.7" cy="8.3" r=".45"/><circle cx="18.2" cy="5.5" r=".45"/><circle cx="21.8" cy="12.8" r=".45"/><circle cx="24.7" cy="11.5" r=".45"/><circle cx="12.1" cy="16.1" r=".45"/><circle cx="14.4" cy="9.0" r=".45"/><circle cx="18.4" cy="14.3" r=".45"/><circle cx="17.3" cy="13.0" r=".45"/></g></svg><svg style="left:646.4px;top:666.6px" width="38" height="21" viewBox="0 0 38 21"><path d="M.7 20 A18.3 18.3 0 0 1 37.3 20z" fill="none" stroke="#828282" stroke-width=".9"/><path d="M19 19.6 L11 7.5 L16.6 13 L18.8 2.2 L21.2 12.4 L26.4 6 L22.8 15 L29 14 L24 18.4z" fill="#8a8a8a"/></svg><svg style="left:707px;top:668.2px" width="37" height="19" viewBox="0 0 37 19"><rect x=".5" y=".5" width="36" height="18" fill="none" stroke="#e8a820"/><path d="M.5 18.5 L18.5 .5 L36.5 18.5" fill="none" stroke="#e8a820" stroke-width=".9"/><path d="M18.5 1V18.5" stroke="#8a6418" stroke-width=".8"/></svg><div class="a" style="left:552px;top:698px;width:227px;height:13px;background:#111;border:1px solid #555"></div><div class="a" style="left:771px;top:698px;width:8px;height:13px;background:#fdb827"></div><div class="t" style="left:542px;width:30px;text-align:center;top:714px;font-size:8.5px;font-weight:bold;color:#aaa;height:8px;overflow:hidden">-1</div><div class="t" style="left:650px;width:30px;text-align:center;top:714px;font-size:8.5px;font-weight:bold;color:#aaa;height:8px;overflow:hidden">0</div><div class="t" style="left:756px;width:30px;text-align:center;top:714px;font-size:8.5px;font-weight:bold;color:#aaa;height:8px;overflow:hidden">+1</div><div class="a" style="left:813px;top:107px;width:539px;height:256px;background:#333"></div><div class="a" style="left:812px;top:107px;width:1.5px;height:615px;background:#1c1c1c"></div><svg width="0" height="0"><defs><linearGradient id="vug" x1="0" y1="0" x2="0" y2="1"><stop offset="0" stop-color="#e9cc86"/><stop offset=".5" stop-color="#e6c985"/><stop offset=".8" stop-color="#cfb373"/><stop offset="1" stop-color="#b39860"/></linearGradient></defs></svg><svg style="left:870px;top:134px" width="206" height="100" viewBox="0 0 206 100"><rect width="206" height="100" rx="2" fill="url(#vug)"/><path d="M23.1 56.8 A117.5 117.5 0 0 1 133.7 29.0" fill="none" stroke="#111" stroke-width="1"/><path d="M133.7 29.0 A117.5 117.5 0 0 1 183.3 56.3" fill="none" stroke="#d62839" stroke-width="2.4"/><path d="M23.1 56.8 L19.1 53.3" stroke="#111" stroke-width="1"/><rect x="180.7" y="53.7" width="5.2" height="5.2" fill="#d62839" transform="rotate(45 183.3 56.3)"/><path d="M33.4 48.2 L30.5 44.2" stroke="#111" stroke-width="1"/><path d="M44.2 41.1 L41.7 36.7" stroke="#111" stroke-width="1"/><path d="M55.7 35.2 L54.3 32.0" stroke="#111" stroke-width="1"/><path d="M67.7 30.6 L66.2 25.8" stroke="#111" stroke-width="1"/><path d="M79.7 27.4 L79.0 24.0" stroke="#111" stroke-width="1"/><path d="M90.6 25.7 L90.1 20.7" stroke="#111" stroke-width="1"/><path d="M103.5 25.0 L103.5 20.0" stroke="#111" stroke-width="1"/><path d="M118.4 26.0 L119.1 21.0" stroke="#111" stroke-width="1"/><path d="M133.7 29.0 L135.0 24.1" stroke="#d62839" stroke-width="1"/><path d="M152.8 35.8 L154.9 31.3" stroke="#d62839" stroke-width="1"/><path d="M171.9 47.0 L174.8 42.9" stroke="#d62839" stroke-width="1"/><text x="12" y="54.2" font-size="9" text-anchor="middle" fill="#111" font-family="Liberation Sans,sans-serif"><tspan textLength="5" lengthAdjust="spacingAndGlyphs">-</tspan>20</text><text x="25" y="43.7" font-size="9" text-anchor="middle" fill="#111" font-family="Liberation Sans,sans-serif"><tspan textLength="5" lengthAdjust="spacingAndGlyphs">-</tspan>10</text><text x="40" y="35.2" font-size="9" text-anchor="middle" fill="#111" font-family="Liberation Sans,sans-serif"><tspan textLength="5" lengthAdjust="spacingAndGlyphs">-</tspan>7</text><text x="63" y="23.7" font-size="9" text-anchor="middle" fill="#111" font-family="Liberation Sans,sans-serif"><tspan textLength="5" lengthAdjust="spacingAndGlyphs">-</tspan>5</text><text x="87" y="18.7" font-size="9" text-anchor="middle" fill="#111" font-family="Liberation Sans,sans-serif"><tspan textLength="5" lengthAdjust="spacingAndGlyphs">-</tspan>3</text><text x="102" y="17.2" font-size="9" text-anchor="middle" fill="#111" font-family="Liberation Sans,sans-serif"><tspan textLength="5" lengthAdjust="spacingAndGlyphs">-</tspan>2</text><text x="118" y="18.7" font-size="9" text-anchor="middle" fill="#111" font-family="Liberation Sans,sans-serif"><tspan textLength="5" lengthAdjust="spacingAndGlyphs">-</tspan>1</text><text x="136" y="21.2" font-size="9" text-anchor="middle" fill="#111" font-family="Liberation Sans,sans-serif">0</text><text x="155" y="29.2" font-size="9" text-anchor="middle" fill="#111" font-family="Liberation Sans,sans-serif">1</text><text x="176" y="40.7" font-size="9" text-anchor="middle" fill="#111" font-family="Liberation Sans,sans-serif">2</text><text x="191" y="53.2" font-size="9" text-anchor="middle" fill="#111" font-family="Liberation Sans,sans-serif">3</text><text x="23" y="65.6" font-size="7.2" text-anchor="middle" fill="#111" font-family="Liberation Sans,sans-serif">0</text><text x="33" y="59.6" font-size="7.2" text-anchor="middle" fill="#111" font-family="Liberation Sans,sans-serif">20</text><text x="43.5" y="51.1" font-size="7.2" text-anchor="middle" fill="#111" font-family="Liberation Sans,sans-serif">40</text><text x="69.5" y="37.6" font-size="7.2" text-anchor="middle" fill="#111" font-family="Liberation Sans,sans-serif">60</text><text x="103" y="33.6" font-size="7.2" text-anchor="middle" fill="#111" font-family="Liberation Sans,sans-serif">80</text><text x="130" y="37.6" font-size="7.2" text-anchor="middle" fill="#111" font-family="Liberation Sans,sans-serif">100</text><text x="103" y="66" font-size="14" font-weight="bold" text-anchor="middle" fill="#111" font-family="Liberation Sans,sans-serif">L</text><path d="M31.1 45.0 L71.9 100" stroke="#0a0a0a" stroke-width="1.6"/></svg><svg style="left:1088px;top:134px" width="206" height="100" viewBox="0 0 206 100"><rect width="206" height="100" rx="2" fill="url(#vug)"/><path d="M23.1 56.8 A117.5 117.5 0 0 1 133.7 29.0" fill="none" stroke="#111" stroke-width="1"/><path d="M133.7 29.0 A117.5 117.5 0 0 1 183.3 56.3" fill="none" stroke="#d62839" stroke-width="2.4"/><path d="M23.1 56.8 L19.1 53.3" stroke="#111" stroke-width="1"/><rect x="180.7" y="53.7" width="5.2" height="5.2" fill="#d62839" transform="rotate(45 183.3 56.3)"/><path d="M33.4 48.2 L30.5 44.2" stroke="#111" stroke-width="1"/><path d="M44.2 41.1 L41.7 36.7" stroke="#111" stroke-width="1"/><path d="M55.7 35.2 L54.3 32.0" stroke="#111" stroke-width="1"/><path d="M67.7 30.6 L66.2 25.8" stroke="#111" stroke-width="1"/><path d="M79.7 27.4 L79.0 24.0" stroke="#111" stroke-width="1"/><path d="M90.6 25.7 L90.1 20.7" stroke="#111" stroke-width="1"/><path d="M103.5 25.0 L103.5 20.0" stroke="#111" stroke-width="1"/><path d="M118.4 26.0 L119.1 21.0" stroke="#111" stroke-width="1"/><path d="M133.7 29.0 L135.0 24.1" stroke="#d62839" stroke-width="1"/><path d="M152.8 35.8 L154.9 31.3" stroke="#d62839" stroke-width="1"/><path d="M171.9 47.0 L174.8 42.9" stroke="#d62839" stroke-width="1"/><text x="12" y="54.2" font-size="9" text-anchor="middle" fill="#111" font-family="Liberation Sans,sans-serif"><tspan textLength="5" lengthAdjust="spacingAndGlyphs">-</tspan>20</text><text x="25" y="43.7" font-size="9" text-anchor="middle" fill="#111" font-family="Liberation Sans,sans-serif"><tspan textLength="5" lengthAdjust="spacingAndGlyphs">-</tspan>10</text><text x="40" y="35.2" font-size="9" text-anchor="middle" fill="#111" font-family="Liberation Sans,sans-serif"><tspan textLength="5" lengthAdjust="spacingAndGlyphs">-</tspan>7</text><text x="63" y="23.7" font-size="9" text-anchor="middle" fill="#111" font-family="Liberation Sans,sans-serif"><tspan textLength="5" lengthAdjust="spacingAndGlyphs">-</tspan>5</text><text x="87" y="18.7" font-size="9" text-anchor="middle" fill="#111" font-family="Liberation Sans,sans-serif"><tspan textLength="5" lengthAdjust="spacingAndGlyphs">-</tspan>3</text><text x="102" y="17.2" font-size="9" text-anchor="middle" fill="#111" font-family="Liberation Sans,sans-serif"><tspan textLength="5" lengthAdjust="spacingAndGlyphs">-</tspan>2</text><text x="118" y="18.7" font-size="9" text-anchor="middle" fill="#111" font-family="Liberation Sans,sans-serif"><tspan textLength="5" lengthAdjust="spacingAndGlyphs">-</tspan>1</text><text x="136" y="21.2" font-size="9" text-anchor="middle" fill="#111" font-family="Liberation Sans,sans-serif">0</text><text x="155" y="29.2" font-size="9" text-anchor="middle" fill="#111" font-family="Liberation Sans,sans-serif">1</text><text x="176" y="40.7" font-size="9" text-anchor="middle" fill="#111" font-family="Liberation Sans,sans-serif">2</text><text x="191" y="53.2" font-size="9" text-anchor="middle" fill="#111" font-family="Liberation Sans,sans-serif">3</text><text x="23" y="65.6" font-size="7.2" text-anchor="middle" fill="#111" font-family="Liberation Sans,sans-serif">0</text><text x="33" y="59.6" font-size="7.2" text-anchor="middle" fill="#111" font-family="Liberation Sans,sans-serif">20</text><text x="43.5" y="51.1" font-size="7.2" text-anchor="middle" fill="#111" font-family="Liberation Sans,sans-serif">40</text><text x="69.5" y="37.6" font-size="7.2" text-anchor="middle" fill="#111" font-family="Liberation Sans,sans-serif">60</text><text x="103" y="33.6" font-size="7.2" text-anchor="middle" fill="#111" font-family="Liberation Sans,sans-serif">80</text><text x="130" y="37.6" font-size="7.2" text-anchor="middle" fill="#111" font-family="Liberation Sans,sans-serif">100</text><text x="103" y="66" font-size="14" font-weight="bold" text-anchor="middle" fill="#111" font-family="Liberation Sans,sans-serif">R</text><path d="M31.1 45.0 L71.9 100" stroke="#0a0a0a" stroke-width="1.6"/></svg><svg style="left:870px;top:246px" width="206" height="100" viewBox="0 0 206 100"><rect width="206" height="100" rx="2" fill="url(#vug)"/><path d="M23.1 56.8 A117.5 117.5 0 0 1 133.7 29.0" fill="none" stroke="#111" stroke-width="1"/><path d="M133.7 29.0 A117.5 117.5 0 0 1 183.3 56.3" fill="none" stroke="#d62839" stroke-width="2.4"/><path d="M23.1 56.8 L19.1 53.3" stroke="#111" stroke-width="1"/><rect x="180.7" y="53.7" width="5.2" height="5.2" fill="#d62839" transform="rotate(45 183.3 56.3)"/><path d="M33.4 48.2 L30.5 44.2" stroke="#111" stroke-width="1"/><path d="M44.2 41.1 L41.7 36.7" stroke="#111" stroke-width="1"/><path d="M55.7 35.2 L54.3 32.0" stroke="#111" stroke-width="1"/><path d="M67.7 30.6 L66.2 25.8" stroke="#111" stroke-width="1"/><path d="M79.7 27.4 L79.0 24.0" stroke="#111" stroke-width="1"/><path d="M90.6 25.7 L90.1 20.7" stroke="#111" stroke-width="1"/><path d="M103.5 25.0 L103.5 20.0" stroke="#111" stroke-width="1"/><path d="M118.4 26.0 L119.1 21.0" stroke="#111" stroke-width="1"/><path d="M133.7 29.0 L135.0 24.1" stroke="#d62839" stroke-width="1"/><path d="M152.8 35.8 L154.9 31.3" stroke="#d62839" stroke-width="1"/><path d="M171.9 47.0 L174.8 42.9" stroke="#d62839" stroke-width="1"/><text x="12" y="54.2" font-size="9" text-anchor="middle" fill="#111" font-family="Liberation Sans,sans-serif"><tspan textLength="5" lengthAdjust="spacingAndGlyphs">-</tspan>20</text><text x="25" y="43.7" font-size="9" text-anchor="middle" fill="#111" font-family="Liberation Sans,sans-serif"><tspan textLength="5" lengthAdjust="spacingAndGlyphs">-</tspan>10</text><text x="40" y="35.2" font-size="9" text-anchor="middle" fill="#111" font-family="Liberation Sans,sans-serif"><tspan textLength="5" lengthAdjust="spacingAndGlyphs">-</tspan>7</text><text x="63" y="23.7" font-size="9" text-anchor="middle" fill="#111" font-family="Liberation Sans,sans-serif"><tspan textLength="5" lengthAdjust="spacingAndGlyphs">-</tspan>5</text><text x="87" y="18.7" font-size="9" text-anchor="middle" fill="#111" font-family="Liberation Sans,sans-serif"><tspan textLength="5" lengthAdjust="spacingAndGlyphs">-</tspan>3</text><text x="102" y="17.2" font-size="9" text-anchor="middle" fill="#111" font-family="Liberation Sans,sans-serif"><tspan textLength="5" lengthAdjust="spacingAndGlyphs">-</tspan>2</text><text x="118" y="18.7" font-size="9" text-anchor="middle" fill="#111" font-family="Liberation Sans,sans-serif"><tspan textLength="5" lengthAdjust="spacingAndGlyphs">-</tspan>1</text><text x="136" y="21.2" font-size="9" text-anchor="middle" fill="#111" font-family="Liberation Sans,sans-serif">0</text><text x="155" y="29.2" font-size="9" text-anchor="middle" fill="#111" font-family="Liberation Sans,sans-serif">1</text><text x="176" y="40.7" font-size="9" text-anchor="middle" fill="#111" font-family="Liberation Sans,sans-serif">2</text><text x="191" y="53.2" font-size="9" text-anchor="middle" fill="#111" font-family="Liberation Sans,sans-serif">3</text><text x="23" y="65.6" font-size="7.2" text-anchor="middle" fill="#111" font-family="Liberation Sans,sans-serif">0</text><text x="33" y="59.6" font-size="7.2" text-anchor="middle" fill="#111" font-family="Liberation Sans,sans-serif">20</text><text x="43.5" y="51.1" font-size="7.2" text-anchor="middle" fill="#111" font-family="Liberation Sans,sans-serif">40</text><text x="69.5" y="37.6" font-size="7.2" text-anchor="middle" fill="#111" font-family="Liberation Sans,sans-serif">60</text><text x="103" y="33.6" font-size="7.2" text-anchor="middle" fill="#111" font-family="Liberation Sans,sans-serif">80</text><text x="130" y="37.6" font-size="7.2" text-anchor="middle" fill="#111" font-family="Liberation Sans,sans-serif">100</text><text x="103" y="66" font-size="14" font-weight="bold" text-anchor="middle" fill="#111" font-family="Liberation Sans,sans-serif">M</text><path d="M31.1 45.0 L71.9 100" stroke="#0a0a0a" stroke-width="1.6"/></svg><svg style="left:1088px;top:246px" width="206" height="100" viewBox="0 0 206 100"><rect width="206" height="100" rx="2" fill="url(#vug)"/><path d="M23.1 56.8 A117.5 117.5 0 0 1 133.7 29.0" fill="none" stroke="#111" stroke-width="1"/><path d="M133.7 29.0 A117.5 117.5 0 0 1 183.3 56.3" fill="none" stroke="#d62839" stroke-width="2.4"/><path d="M23.1 56.8 L19.1 53.3" stroke="#111" stroke-width="1"/><rect x="180.7" y="53.7" width="5.2" height="5.2" fill="#d62839" transform="rotate(45 183.3 56.3)"/><path d="M33.4 48.2 L30.5 44.2" stroke="#111" stroke-width="1"/><path d="M44.2 41.1 L41.7 36.7" stroke="#111" stroke-width="1"/><path d="M55.7 35.2 L54.3 32.0" stroke="#111" stroke-width="1"/><path d="M67.7 30.6 L66.2 25.8" stroke="#111" stroke-width="1"/><path d="M79.7 27.4 L79.0 24.0" stroke="#111" stroke-width="1"/><path d="M90.6 25.7 L90.1 20.7" stroke="#111" stroke-width="1"/><path d="M103.5 25.0 L103.5 20.0" stroke="#111" stroke-width="1"/><path d="M118.4 26.0 L119.1 21.0" stroke="#111" stroke-width="1"/><path d="M133.7 29.0 L135.0 24.1" stroke="#d62839" stroke-width="1"/><path d="M152.8 35.8 L154.9 31.3" stroke="#d62839" stroke-width="1"/><path d="M171.9 47.0 L174.8 42.9" stroke="#d62839" stroke-width="1"/><text x="12" y="54.2" font-size="9" text-anchor="middle" fill="#111" font-family="Liberation Sans,sans-serif"><tspan textLength="5" lengthAdjust="spacingAndGlyphs">-</tspan>20</text><text x="25" y="43.7" font-size="9" text-anchor="middle" fill="#111" font-family="Liberation Sans,sans-serif"><tspan textLength="5" lengthAdjust="spacingAndGlyphs">-</tspan>10</text><text x="40" y="35.2" font-size="9" text-anchor="middle" fill="#111" font-family="Liberation Sans,sans-serif"><tspan textLength="5" lengthAdjust="spacingAndGlyphs">-</tspan>7</text><text x="63" y="23.7" font-size="9" text-anchor="middle" fill="#111" font-family="Liberation Sans,sans-serif"><tspan textLength="5" lengthAdjust="spacingAndGlyphs">-</tspan>5</text><text x="87" y="18.7" font-size="9" text-anchor="middle" fill="#111" font-family="Liberation Sans,sans-serif"><tspan textLength="5" lengthAdjust="spacingAndGlyphs">-</tspan>3</text><text x="102" y="17.2" font-size="9" text-anchor="middle" fill="#111" font-family="Liberation Sans,sans-serif"><tspan textLength="5" lengthAdjust="spacingAndGlyphs">-</tspan>2</text><text x="118" y="18.7" font-size="9" text-anchor="middle" fill="#111" font-family="Liberation Sans,sans-serif"><tspan textLength="5" lengthAdjust="spacingAndGlyphs">-</tspan>1</text><text x="136" y="21.2" font-size="9" text-anchor="middle" fill="#111" font-family="Liberation Sans,sans-serif">0</text><text x="155" y="29.2" font-size="9" text-anchor="middle" fill="#111" font-family="Liberation Sans,sans-serif">1</text><text x="176" y="40.7" font-size="9" text-anchor="middle" fill="#111" font-family="Liberation Sans,sans-serif">2</text><text x="191" y="53.2" font-size="9" text-anchor="middle" fill="#111" font-family="Liberation Sans,sans-serif">3</text><text x="23" y="65.6" font-size="7.2" text-anchor="middle" fill="#111" font-family="Liberation Sans,sans-serif">0</text><text x="33" y="59.6" font-size="7.2" text-anchor="middle" fill="#111" font-family="Liberation Sans,sans-serif">20</text><text x="43.5" y="51.1" font-size="7.2" text-anchor="middle" fill="#111" font-family="Liberation Sans,sans-serif">40</text><text x="69.5" y="37.6" font-size="7.2" text-anchor="middle" fill="#111" font-family="Liberation Sans,sans-serif">60</text><text x="103" y="33.6" font-size="7.2" text-anchor="middle" fill="#111" font-family="Liberation Sans,sans-serif">80</text><text x="130" y="37.6" font-size="7.2" text-anchor="middle" fill="#111" font-family="Liberation Sans,sans-serif">100</text><text x="103" y="66" font-size="14" font-weight="bold" text-anchor="middle" fill="#111" font-family="Liberation Sans,sans-serif">S</text><path d="M20.3 53.9 L63.6 100" stroke="#0a0a0a" stroke-width="1.6"/></svg><div class="a" style="left:1307px;top:185px;width:40px;height:29px;background:#fdb827"></div><div class="t" style="left:1307px;width:40px;text-align:center;top:194px;font-size:11px;color:#444">VU</div><div class="t" style="left:1302px;width:50px;text-align:center;top:218px;font-size:8px;color:#888;letter-spacing:-.2px">-10 dBFS</div><div class="a" style="left:1307px;top:246px;width:40px;height:29px;background:#454545"></div><div class="t" style="left:1307px;width:40px;text-align:center;top:255px;font-size:11px;color:#787878">PPM</div><div class="t" style="left:1302px;width:50px;text-align:center;top:279px;font-size:8px;color:#888;letter-spacing:-.2px">-12 dBFS</div><div class="a" style="left:1338px;top:112.5px;width:13.3px;height:20px;overflow:hidden"><svg style="left:2px;top:1px" width="18" height="18" viewBox="-9 -9 18 18"><path d="M-3.6 -5.4 A6.5 6.5 0 1 0 3.6 -5.4" fill="none" stroke="#f0b020" stroke-width="1.4"/><path d="M0 -7.4 V-.8" stroke="#f0b020" stroke-width="2"/></svg></div><div class="a" style="left:813px;top:363px;width:539px;height:176px;background:#111"></div><div class="a" style="left:813px;top:539px;width:539px;height:2px;background:#2b2b2b"></div><svg style="left:823px;top:368px" width="18" height="18" viewBox="-9 -9 18 18"><circle r="4.7" fill="none" stroke="#8c8c8c" stroke-width="2.5"/><rect x="-1" y="-7.5" width="2" height="2.4" transform="rotate(0)" fill="#8c8c8c"/><rect x="-1" y="-7.5" width="2" height="2.4" transform="rotate(30)" fill="#8c8c8c"/><rect x="-1" y="-7.5" width="2" height="2.4" transform="rotate(60)" fill="#8c8c8c"/><rect x="-1" y="-7.5" width="2" height="2.4" transform="rotate(90)" fill="#8c8c8c"/><rect x="-1" y="-7.5" width="2" height="2.4" transform="rotate(120)" fill="#8c8c8c"/><rect x="-1" y="-7.5" width="2" height="2.4" transform="rotate(150)" fill="#8c8c8c"/><rect x="-1" y="-7.5" width="2" height="2.4" transform="rotate(180)" fill="#8c8c8c"/><rect x="-1" y="-7.5" width="2" height="2.4" transform="rotate(210)" fill="#8c8c8c"/><rect x="-1" y="-7.5" width="2" height="2.4" transform="rotate(240)" fill="#8c8c8c"/><rect x="-1" y="-7.5" width="2" height="2.4" transform="rotate(270)" fill="#8c8c8c"/><rect x="-1" y="-7.5" width="2" height="2.4" transform="rotate(300)" fill="#8c8c8c"/><rect x="-1" y="-7.5" width="2" height="2.4" transform="rotate(330)" fill="#8c8c8c"/></svg><div class="a" style="left:1338px;top:368px;width:13.3px;height:20px;overflow:hidden"><svg style="left:2px;top:1px" width="18" height="18" viewBox="-9 -9 18 18"><path d="M-3.6 -5.4 A6.5 6.5 0 1 0 3.6 -5.4" fill="none" stroke="#f0b020" stroke-width="1.4"/><path d="M0 -7.4 V-.8" stroke="#f0b020" stroke-width="2"/></svg></div><svg style="left:0;top:0" width="1352" height="540" viewBox="0 0 1352 540"><path d="M839.5 394.5H1347.5 M839.5 408.5H1347.5 M839.5 420.5H1347.5 M839.5 433.5H1347.5 M839.5 445.5H1347.5 M839.5 458.5H1347.5 M839.5 470.5H1347.5 M839.5 483.5H1347.5 M839.5 495.5H1347.5 M839.5 508.5H1347.5 M839.5 520.5H1347.5 M839.5 401.5h10.5 M1337.0 401.5h10.5 M839.5 415.5h10.5 M1337.0 415.5h10.5 M839.5 427.5h10.5 M1337.0 427.5h10.5 M839.5 440.5h10.5 M1337.0 440.5h10.5 M839.5 452.5h10.5 M1337.0 452.5h10.5 M839.5 465.5h10.5 M1337.0 465.5h10.5 M839.5 477.5h10.5 M1337.0 477.5h10.5 M839.5 490.5h10.5 M1337.0 490.5h10.5 M839.5 502.5h10.5 M1337.0 502.5h10.5 M839.5 515.5h10.5 M1337.0 515.5h10.5 M839.5 394.5V520.5 M1347.5 394.5V520.5 M870.5 394.5V520.5 M891.5 394.5V520.5 M908.5 394.5V520.5 M921.5 394.5V520.5 M932.5 394.5V520.5 M942.5 394.5V520.5 M951.5 394.5V520.5 M958.5 394.5V520.5 M1009.5 394.5V520.5 M1039.5 394.5V520.5 M1060.5 394.5V520.5 M1076.5 394.5V520.5 M1090.5 394.5V520.5 M1101.5 394.5V520.5 M1111.5 394.5V520.5 M1119.5 394.5V520.5 M1127.5 394.5V520.5 M1178.5 394.5V520.5 M1208.5 394.5V520.5 M1229.5 394.5V520.5 M1245.5 394.5V520.5 M1259.5 394.5V520.5 M1270.5 394.5V520.5 M1280.5 394.5V520.5 M1288.5 394.5V520.5 M1296.5 394.5V520.5 M1309.5 394.5V520.5 M1326.5 394.5V520.5" fill="none" stroke="#4c4c4c" stroke-width="1"/><rect x="935.5" y="502.8" width="8.77" height="17.7" fill="#7d5a06"/><rect x="944.0" y="493.0" width="8.77" height="27.5" fill="#7d5a06"/><rect x="952.4" y="484.4" width="8.77" height="36.1" fill="#7d5a06"/><rect x="960.9" y="469.0" width="8.77" height="51.5" fill="#7d5a06"/><rect x="969.4" y="480.8" width="8.77" height="39.7" fill="#7d5a06"/><rect x="977.9" y="464.9" width="8.77" height="55.6" fill="#7d5a06"/><rect x="986.3" y="475.9" width="8.77" height="44.6" fill="#7d5a06"/><rect x="994.8" y="482.8" width="8.77" height="37.7" fill="#7d5a06"/><rect x="1003.3" y="474.3" width="8.77" height="46.2" fill="#7d5a06"/><rect x="1011.7" y="464.5" width="8.77" height="56.0" fill="#7d5a06"/><rect x="1020.2" y="472.2" width="8.77" height="48.3" fill="#7d5a06"/><rect x="1028.7" y="462.1" width="8.77" height="58.4" fill="#7d5a06"/><rect x="1037.1" y="461.6" width="8.77" height="58.9" fill="#7d5a06"/><rect x="1045.6" y="462.5" width="8.77" height="58.0" fill="#7d5a06"/><rect x="1054.1" y="461.2" width="8.77" height="59.3" fill="#7d5a06"/><rect x="1062.6" y="463.7" width="8.77" height="56.8" fill="#7d5a06"/><rect x="1071.0" y="461.6" width="8.77" height="58.9" fill="#7d5a06"/><rect x="1079.5" y="453.9" width="8.77" height="66.6" fill="#7d5a06"/><rect x="1088.0" y="449.0" width="8.77" height="71.5" fill="#7d5a06"/><rect x="1096.4" y="445.0" width="8.77" height="75.5" fill="#7d5a06"/><rect x="1104.9" y="444.5" width="8.77" height="76.0" fill="#7d5a06"/><rect x="1113.4" y="447.4" width="8.77" height="73.1" fill="#7d5a06"/><rect x="1121.8" y="458.4" width="8.77" height="62.1" fill="#7d5a06"/><rect x="1130.3" y="466.1" width="8.77" height="54.4" fill="#7d5a06"/><rect x="1138.8" y="459.2" width="8.77" height="61.3" fill="#7d5a06"/><rect x="1147.3" y="462.1" width="8.77" height="58.4" fill="#7d5a06"/><rect x="1155.7" y="449.4" width="8.77" height="71.1" fill="#7d5a06"/><rect x="1164.2" y="453.5" width="8.77" height="67.0" fill="#7d5a06"/><rect x="1172.7" y="449.8" width="8.77" height="70.7" fill="#7d5a06"/><rect x="1181.1" y="446.2" width="8.77" height="74.3" fill="#7d5a06"/><rect x="1189.6" y="448.6" width="8.77" height="71.9" fill="#7d5a06"/><rect x="1198.1" y="457.6" width="8.77" height="62.9" fill="#7d5a06"/><rect x="1206.5" y="451.5" width="8.77" height="69.0" fill="#7d5a06"/><rect x="1215.0" y="453.9" width="8.77" height="66.6" fill="#7d5a06"/><rect x="1223.5" y="464.9" width="8.77" height="55.6" fill="#7d5a06"/><rect x="1232.0" y="460.8" width="8.77" height="59.7" fill="#7d5a06"/><rect x="1240.4" y="471.0" width="8.77" height="49.5" fill="#7d5a06"/><rect x="1248.9" y="475.5" width="8.77" height="45.0" fill="#7d5a06"/><rect x="1257.4" y="486.5" width="8.77" height="34.0" fill="#7d5a06"/><rect x="1265.8" y="515.4" width="8.77" height="5.1" fill="#7d5a06"/><rect x="936.05" y="502.5" width="7.67" height="18.0" fill="#fdb92a"/><rect x="944.52" y="492.7" width="7.67" height="27.8" fill="#fdb92a"/><rect x="952.99" y="484.1" width="7.67" height="36.4" fill="#fdb92a"/><rect x="961.46" y="468.7" width="7.67" height="51.8" fill="#fdb92a"/><rect x="969.93" y="480.5" width="7.67" height="40.0" fill="#fdb92a"/><rect x="978.40" y="464.6" width="7.67" height="55.9" fill="#fdb92a"/><rect x="986.87" y="475.6" width="7.67" height="44.9" fill="#fdb92a"/><rect x="995.34" y="482.5" width="7.67" height="38.0" fill="#fdb92a"/><rect x="1003.81" y="474.0" width="7.67" height="46.5" fill="#fdb92a"/><rect x="1012.28" y="464.2" width="7.67" height="56.3" fill="#fdb92a"/><rect x="1020.75" y="471.9" width="7.67" height="48.6" fill="#fdb92a"/><rect x="1029.22" y="461.8" width="7.67" height="58.7" fill="#fdb92a"/><rect x="1037.69" y="461.3" width="7.67" height="59.2" fill="#fdb92a"/><rect x="1046.16" y="462.2" width="7.67" height="58.3" fill="#fdb92a"/><rect x="1054.63" y="460.9" width="7.67" height="59.6" fill="#fdb92a"/><rect x="1063.10" y="463.4" width="7.67" height="57.1" fill="#fdb92a"/><rect x="1071.57" y="461.3" width="7.67" height="59.2" fill="#fdb92a"/><rect x="1080.04" y="453.6" width="7.67" height="66.9" fill="#fdb92a"/><rect x="1088.51" y="448.7" width="7.67" height="71.8" fill="#fdb92a"/><rect x="1096.98" y="444.7" width="7.67" height="75.8" fill="#fdb92a"/><rect x="1105.45" y="444.2" width="7.67" height="76.3" fill="#fdb92a"/><rect x="1113.92" y="447.1" width="7.67" height="73.4" fill="#fdb92a"/><rect x="1122.39" y="458.1" width="7.67" height="62.4" fill="#fdb92a"/><rect x="1130.86" y="465.8" width="7.67" height="54.7" fill="#fdb92a"/><rect x="1139.33" y="458.9" width="7.67" height="61.6" fill="#fdb92a"/><rect x="1147.80" y="461.8" width="7.67" height="58.7" fill="#fdb92a"/><rect x="1156.27" y="449.1" width="7.67" height="71.4" fill="#fdb92a"/><rect x="1164.74" y="453.2" width="7.67" height="67.3" fill="#fdb92a"/><rect x="1173.21" y="449.5" width="7.67" height="71.0" fill="#fdb92a"/><rect x="1181.68" y="445.9" width="7.67" height="74.6" fill="#fdb92a"/><rect x="1190.15" y="448.3" width="7.67" height="72.2" fill="#fdb92a"/><rect x="1198.62" y="457.3" width="7.67" height="63.2" fill="#fdb92a"/><rect x="1207.09" y="451.2" width="7.67" height="69.3" fill="#fdb92a"/><rect x="1215.56" y="453.6" width="7.67" height="66.9" fill="#fdb92a"/><rect x="1224.03" y="464.6" width="7.67" height="55.9" fill="#fdb92a"/><rect x="1232.50" y="460.5" width="7.67" height="60.0" fill="#fdb92a"/><rect x="1240.97" y="470.7" width="7.67" height="49.8" fill="#fdb92a"/><rect x="1249.44" y="475.2" width="7.67" height="45.3" fill="#fdb92a"/><rect x="1257.91" y="486.2" width="7.67" height="34.3" fill="#fdb92a"/><rect x="1266.38" y="515.1" width="7.67" height="5.4" fill="#fdb92a"/><path d="M935.6 508.5h8.5 M944.1 495.5h8.5 M944.1 508.5h8.5 M952.5 495.5h8.5 M952.5 508.5h8.5 M961.0 470.5h8.5 M961.0 483.5h8.5 M961.0 495.5h8.5 M961.0 508.5h8.5 M969.5 483.5h8.5 M969.5 495.5h8.5 M969.5 508.5h8.5 M978.0 470.5h8.5 M978.0 483.5h8.5 M978.0 495.5h8.5 M978.0 508.5h8.5 M986.4 483.5h8.5 M986.4 495.5h8.5 M986.4 508.5h8.5 M994.9 495.5h8.5 M994.9 508.5h8.5 M1003.4 483.5h8.5 M1003.4 495.5h8.5 M1003.4 508.5h8.5 M1011.8 470.5h8.5 M1011.8 483.5h8.5 M1011.8 495.5h8.5 M1011.8 508.5h8.5 M1020.3 483.5h8.5 M1020.3 495.5h8.5 M1020.3 508.5h8.5 M1028.8 470.5h8.5 M1028.8 483.5h8.5 M1028.8 495.5h8.5 M1028.8 508.5h8.5 M1037.2 470.5h8.5 M1037.2 483.5h8.5 M1037.2 495.5h8.5 M1037.2 508.5h8.5 M1045.7 470.5h8.5 M1045.7 483.5h8.5 M1045.7 495.5h8.5 M1045.7 508.5h8.5 M1054.2 470.5h8.5 M1054.2 483.5h8.5 M1054.2 495.5h8.5 M1054.2 508.5h8.5 M1062.7 470.5h8.5 M1062.7 483.5h8.5 M1062.7 495.5h8.5 M1062.7 508.5h8.5 M1071.1 470.5h8.5 M1071.1 483.5h8.5 M1071.1 495.5h8.5 M1071.1 508.5h8.5 M1079.6 458.5h8.5 M1079.6 470.5h8.5 M1079.6 483.5h8.5 M1079.6 495.5h8.5 M1079.6 508.5h8.5 M1088.1 458.5h8.5 M1088.1 470.5h8.5 M1088.1 483.5h8.5 M1088.1 495.5h8.5 M1088.1 508.5h8.5 M1096.5 458.5h8.5 M1096.5 470.5h8.5 M1096.5 483.5h8.5 M1096.5 495.5h8.5 M1096.5 508.5h8.5 M1105.0 445.5h8.5 M1105.0 458.5h8.5 M1105.0 470.5h8.5 M1105.0 483.5h8.5 M1105.0 495.5h8.5 M1105.0 508.5h8.5 M1113.5 458.5h8.5 M1113.5 470.5h8.5 M1113.5 483.5h8.5 M1113.5 495.5h8.5 M1113.5 508.5h8.5 M1121.9 470.5h8.5 M1121.9 483.5h8.5 M1121.9 495.5h8.5 M1121.9 508.5h8.5 M1130.4 470.5h8.5 M1130.4 483.5h8.5 M1130.4 495.5h8.5 M1130.4 508.5h8.5 M1138.9 470.5h8.5 M1138.9 483.5h8.5 M1138.9 495.5h8.5 M1138.9 508.5h8.5 M1147.4 470.5h8.5 M1147.4 483.5h8.5 M1147.4 495.5h8.5 M1147.4 508.5h8.5 M1155.8 458.5h8.5 M1155.8 470.5h8.5 M1155.8 483.5h8.5 M1155.8 495.5h8.5 M1155.8 508.5h8.5 M1164.3 458.5h8.5 M1164.3 470.5h8.5 M1164.3 483.5h8.5 M1164.3 495.5h8.5 M1164.3 508.5h8.5 M1172.8 458.5h8.5 M1172.8 470.5h8.5 M1172.8 483.5h8.5 M1172.8 495.5h8.5 M1172.8 508.5h8.5 M1181.2 458.5h8.5 M1181.2 470.5h8.5 M1181.2 483.5h8.5 M1181.2 495.5h8.5 M1181.2 508.5h8.5 M1189.7 458.5h8.5 M1189.7 470.5h8.5 M1189.7 483.5h8.5 M1189.7 495.5h8.5 M1189.7 508.5h8.5 M1198.2 458.5h8.5 M1198.2 470.5h8.5 M1198.2 483.5h8.5 M1198.2 495.5h8.5 M1198.2 508.5h8.5 M1206.6 458.5h8.5 M1206.6 470.5h8.5 M1206.6 483.5h8.5 M1206.6 495.5h8.5 M1206.6 508.5h8.5 M1215.1 458.5h8.5 M1215.1 470.5h8.5 M1215.1 483.5h8.5 M1215.1 495.5h8.5 M1215.1 508.5h8.5 M1223.6 470.5h8.5 M1223.6 483.5h8.5 M1223.6 495.5h8.5 M1223.6 508.5h8.5 M1232.1 470.5h8.5 M1232.1 483.5h8.5 M1232.1 495.5h8.5 M1232.1 508.5h8.5 M1240.5 483.5h8.5 M1240.5 495.5h8.5 M1240.5 508.5h8.5 M1249.0 483.5h8.5 M1249.0 495.5h8.5 M1249.0 508.5h8.5 M1257.5 495.5h8.5 M1257.5 508.5h8.5" fill="none" stroke="#a87a12" stroke-width="1"/><text x="837.5" y="398.9" font-size="8.5" font-weight="bold" text-anchor="end" fill="#a8a8a8" font-family="Liberation Sans,sans-serif">0</text><text x="837.5" y="411.5" font-size="8.5" font-weight="bold" text-anchor="end" fill="#a8a8a8" font-family="Liberation Sans,sans-serif">-5</text><text x="837.5" y="423.5" font-size="8.5" font-weight="bold" text-anchor="end" fill="#a8a8a8" font-family="Liberation Sans,sans-serif">-10</text><text x="837.5" y="436.5" font-size="8.5" font-weight="bold" text-anchor="end" fill="#a8a8a8" font-family="Liberation Sans,sans-serif">-15</text><text x="837.5" y="448.5" font-size="8.5" font-weight="bold" text-anchor="end" fill="#a8a8a8" font-family="Liberation Sans,sans-serif">-20</text><text x="837.5" y="461.5" font-size="8.5" font-weight="bold" text-anchor="end" fill="#a8a8a8" font-family="Liberation Sans,sans-serif">-25</text><text x="837.5" y="473.5" font-size="8.5" font-weight="bold" text-anchor="end" fill="#a8a8a8" font-family="Liberation Sans,sans-serif">-30</text><text x="837.5" y="486.5" font-size="8.5" font-weight="bold" text-anchor="end" fill="#a8a8a8" font-family="Liberation Sans,sans-serif">-35</text><text x="837.5" y="498.5" font-size="8.5" font-weight="bold" text-anchor="end" fill="#a8a8a8" font-family="Liberation Sans,sans-serif">-40</text><text x="837.5" y="511.5" font-size="8.5" font-weight="bold" text-anchor="end" fill="#a8a8a8" font-family="Liberation Sans,sans-serif">-45</text><text x="839.9" y="530.5" font-size="8.5" font-weight="bold" text-anchor="middle" fill="#a8a8a8" font-family="Liberation Sans,sans-serif">20</text><text x="869.6" y="530.5" font-size="8.5" font-weight="bold" text-anchor="middle" fill="#a8a8a8" font-family="Liberation Sans,sans-serif">30</text><text x="907.1" y="530.5" font-size="8.5" font-weight="bold" text-anchor="middle" fill="#a8a8a8" font-family="Liberation Sans,sans-serif">50</text><text x="931.7" y="530.5" font-size="8.5" font-weight="bold" text-anchor="middle" fill="#a8a8a8" font-family="Liberation Sans,sans-serif">70</text><text x="957.9" y="530.5" font-size="8.5" font-weight="bold" text-anchor="middle" fill="#a8a8a8" font-family="Liberation Sans,sans-serif">100</text><text x="1008.7" y="530.5" font-size="8.5" font-weight="bold" text-anchor="middle" fill="#a8a8a8" font-family="Liberation Sans,sans-serif">200</text><text x="1038.4" y="530.5" font-size="8.5" font-weight="bold" text-anchor="middle" fill="#a8a8a8" font-family="Liberation Sans,sans-serif">300</text><text x="1075.9" y="530.5" font-size="8.5" font-weight="bold" text-anchor="middle" fill="#a8a8a8" font-family="Liberation Sans,sans-serif">500</text><text x="1100.5" y="530.5" font-size="8.5" font-weight="bold" text-anchor="middle" fill="#a8a8a8" font-family="Liberation Sans,sans-serif">700</text><text x="1126.7" y="530.5" font-size="8.5" font-weight="bold" text-anchor="middle" fill="#a8a8a8" font-family="Liberation Sans,sans-serif">1k</text><text x="1177.5" y="530.5" font-size="8.5" font-weight="bold" text-anchor="middle" fill="#a8a8a8" font-family="Liberation Sans,sans-serif">2k</text><text x="1207.2" y="530.5" font-size="8.5" font-weight="bold" text-anchor="middle" fill="#a8a8a8" font-family="Liberation Sans,sans-serif">3k</text><text x="1244.7" y="530.5" font-size="8.5" font-weight="bold" text-anchor="middle" fill="#a8a8a8" font-family="Liberation Sans,sans-serif">5k</text><text x="1269.3" y="530.5" font-size="8.5" font-weight="bold" text-anchor="middle" fill="#a8a8a8" font-family="Liberation Sans,sans-serif">7k</text><text x="1295.5" y="530.5" font-size="8.5" font-weight="bold" text-anchor="middle" fill="#a8a8a8" font-family="Liberation Sans,sans-serif">10k</text></svg><div class="t" style="left:1341px;top:523px;width:11px;overflow:hidden;font-size:8.5px;font-weight:bold;color:#a8a8a8">20k</div><div class="a" style="left:813px;top:541px;width:539px;height:181px;background:linear-gradient(90deg,#1a1a1a 0,#212121 6px,#212121 100%)"></div><svg style="left:823px;top:544.7px" width="18" height="18" viewBox="-9 -9 18 18"><circle r="4.7" fill="none" stroke="#8c8c8c" stroke-width="2.5"/><rect x="-1" y="-7.5" width="2" height="2.4" transform="rotate(0)" fill="#8c8c8c"/><rect x="-1" y="-7.5" width="2" height="2.4" transform="rotate(30)" fill="#8c8c8c"/><rect x="-1" y="-7.5" width="2" height="2.4" transform="rotate(60)" fill="#8c8c8c"/><rect x="-1" y="-7.5" width="2" height="2.4" transform="rotate(90)" fill="#8c8c8c"/><rect x="-1" y="-7.5" width="2" height="2.4" transform="rotate(120)" fill="#8c8c8c"/><rect x="-1" y="-7.5" width="2" height="2.4" transform="rotate(150)" fill="#8c8c8c"/><rect x="-1" y="-7.5" width="2" height="2.4" transform="rotate(180)" fill="#8c8c8c"/><rect x="-1" y="-7.5" width="2" height="2.4" transform="rotate(210)" fill="#8c8c8c"/><rect x="-1" y="-7.5" width="2" height="2.4" transform="rotate(240)" fill="#8c8c8c"/><rect x="-1" y="-7.5" width="2" height="2.4" transform="rotate(270)" fill="#8c8c8c"/><rect x="-1" y="-7.5" width="2" height="2.4" transform="rotate(300)" fill="#8c8c8c"/><rect x="-1" y="-7.5" width="2" height="2.4" transform="rotate(330)" fill="#8c8c8c"/></svg><div class="a" style="left:1338px;top:545.5px;width:13.3px;height:20px;overflow:hidden"><svg style="left:2px;top:1px" width="18" height="18" viewBox="-9 -9 18 18"><path d="M-3.6 -5.4 A6.5 6.5 0 1 0 3.6 -5.4" fill="none" stroke="#f0b020" stroke-width="1.4"/><path d="M0 -7.4 V-.8" stroke="#f0b020" stroke-width="2"/></svg></div><div class="a" style="left:842px;top:572px;width:506px;height:150px;background:#000;border-top:1px solid #b4b4b4;border-left:1px solid #b4b4b4;border-right:1px solid #8a8a8a"></div><svg width="0" height="0"><defs><filter id="nzc" x="0" y="0" width="100%" height="100%"><feTurbulence type="fractalNoise" baseFrequency=".2 .55" numOctaves="3" seed="7"/><feColorMatrix values="0 0 0 0 0.55  0 0 0 0 0.97  0 0 0 0 0.45  3.4 0 0 0 -1.25"/></filter><filter id="nzy" x="0" y="0" width="100%" height="100%"><feTurbulence type="fractalNoise" baseFrequency=".18 .6" numOctaves="3" seed="23"/><feColorMatrix values="0 0 0 0 0.98  0 0 0 0 0.96  0 0 0 0 0.06  0 5 0 0 -2.15"/></filter><filter id="nzo" x="0" y="0" width="100%" height="100%"><feTurbulence type="fractalNoise" baseFrequency=".2 .6" numOctaves="2" seed="41"/><feColorMatrix values="0 0 0 0 1  0 0 0 0 0.55  0 0 0 0 0  0 0 6 0 -3.75"/></filter><filter id="nzb" x="0" y="0" width="100%" height="100%"><feTurbulence type="fractalNoise" baseFrequency=".3 .2" numOctaves="2" seed="3"/><feColorMatrix values="0 0 0 0 0  0 0 0 0 0  0 0 0 0 0  2.4 0 0 0 -.75"/></filter><linearGradient id="fdg" x1="0" y1="0" x2="0" y2="1"><stop offset="0" stop-color="#fff" stop-opacity="0"/><stop offset=".3" stop-color="#fff" stop-opacity=".75"/><stop offset="1" stop-color="#fff" stop-opacity="1"/></linearGradient><mask id="fdm" maskContentUnits="objectBoundingBox"><rect width="1" height="1" fill="url(#fdg)"/></mask></defs></svg><div class="a" style="left:1127px;top:591px;width:22px;height:131px;background:linear-gradient(rgba(4,14,120,.0) 0,rgba(6,18,130,.8) 1%,rgba(6,18,130,.7) 4%,rgba(0,4,40,.5) 5%,rgba(6,20,150,.85) 6%,#0a28c8 7%,#0848f0 7.8%,#0c80ff 9.2%,#14b0ff 11.5%,#20d0f8 13.7%,#2cdcec 20%,#38e2dc 36%,#40e4d4 60%,#3ce2d8 100%)"></div><svg style="left:1127px;top:591px" width="22" height="131"><rect y="0" width="22" height="9" filter="url(#nzb)"/><g mask="url(#fdm)"><rect y="24" width="22" height="107" filter="url(#nzc)"/></g><g mask="url(#fdm)"><rect y="44" width="22" height="87" filter="url(#nzy)"/></g><rect y="62" width="22" height="69" filter="url(#nzo)"/><rect x="18.4" y="0" width="1" height="131" fill="url(#vln)"/><rect x="0" y="7" width="1.2" height="124" fill="#0038d8" opacity=".9"/></svg><div class="a" style="left:1271px;top:591px;width:76.3px;height:131px;background:linear-gradient(rgba(4,14,120,.0) 0,rgba(6,18,130,.8) 1%,rgba(6,18,130,.7) 4%,rgba(0,4,40,.5) 5%,rgba(6,20,150,.85) 6%,#0a28c8 7%,#0848f0 7.8%,#0c80ff 9.2%,#14b0ff 11.5%,#20d0f8 13.7%,#2cdcec 20%,#38e2dc 36%,#40e4d4 60%,#3ce2d8 100%)"></div><svg style="left:1271px;top:591px" width="76.3" height="131"><rect y="0" width="76.3" height="9" filter="url(#nzb)"/><g mask="url(#fdm)"><rect y="24" width="76.3" height="107" filter="url(#nzc)"/></g><g mask="url(#fdm)"><rect y="44" width="76.3" height="87" filter="url(#nzy)"/></g><rect y="62" width="76.3" height="69" filter="url(#nzo)"/><rect x="17" y="0" width="1" height="131" fill="url(#vln)"/><rect x="37" y="0" width="1" height="131" fill="url(#vln)"/><rect x="47" y="0" width="1" height="131" fill="url(#vln)"/><rect x="57" y="0" width="1" height="131" fill="url(#vln)"/><rect x="0" y="7" width="1.2" height="124" fill="#0038d8" opacity=".9"/></svg><svg width="0" height="0"><defs><linearGradient id="vln" x1="0" y1="0" x2="0" y2="1"><stop offset="0" stop-color="#000640" stop-opacity=".9"/><stop offset=".12" stop-color="#0028c0" stop-opacity=".85"/><stop offset=".35" stop-color="#0070f0" stop-opacity=".55"/><stop offset=".55" stop-color="#00a0f0" stop-opacity=".2"/><stop offset="1" stop-color="#00a0f0" stop-opacity=".08"/></linearGradient></defs></svg><svg style="left:0;top:0" width="850" height="722" viewBox="0 0 850 722"><path d="M842 714.5h-3.5 M842 695.5h-2 M842 684.5h-3.5 M842 677.5h-2 M842 671.5h-2 M842 666.5h-2 M842 662.5h-2 M842 658.5h-2 M842 655.5h-2 M842 652.5h-3.5 M842 634.5h-2 M842 623.5h-3.5 M842 616.5h-2 M842 610.5h-2 M842 605.5h-2 M842 601.5h-2 M842 597.5h-2 M842 594.5h-2 M842 592.5h-3.5 M842 572.5h-3.5" stroke="#b4b4b4" stroke-width="1" fill="none"/></svg><div class="t" style="right:527.5px;top:569.8000000000001px;font-size:8.5px;font-weight:bold;color:#a8a8a8;height:9.0px;overflow:hidden">20k</div><div class="t" style="right:527.5px;top:587.7px;font-size:8.5px;font-weight:bold;color:#a8a8a8;height:9.0px;overflow:hidden">10k</div><div class="t" style="right:527.5px;top:619.3000000000001px;font-size:8.5px;font-weight:bold;color:#a8a8a8;height:9.0px;overflow:hidden">3k</div><div class="t" style="right:527.5px;top:648.6px;font-size:8.5px;font-weight:bold;color:#a8a8a8;height:9.0px;overflow:hidden">1k</div><div class="t" style="right:527.5px;top:680.3000000000001px;font-size:8.5px;font-weight:bold;color:#a8a8a8;height:9.0px;overflow:hidden">300</div><div class="t" style="right:527.5px;top:710.2px;font-size:8.5px;font-weight:bold;color:#a8a8a8;height:9.0px;overflow:hidden">100</div><div class="a" style="left:0;top:727.7px;width:1366px;height:40.3px;background:linear-gradient(90deg,#0a141b 0,#0c181f 420px,#12191d 650px,#1a1c1d 950px,#212121 1150px,#232323 100%)"></div><div class="a" style="left:0;top:727.7px;width:48px;height:40.3px;background:#09141b"></div><svg style="left:16px;top:740px" width="17" height="17" viewBox="0 0 17 17"><path d="M0 2.4 L7 1.4 V8 H0z M8 1.25 L17 0 V8 H8z M0 9 H7 V15.6 L0 14.6z M8 9 H17 V17 L8 15.75z" fill="#fff"/></svg><div class="a" style="left:48px;top:727.7px;width:343.7px;height:40.3px;background:#3b3b3b"></div><div class="a" style="left:57px;top:738px;width:21px;height:21px;border-radius:11px;border:2.5px solid #f4f4f4"></div><div class="t" style="left:88px;top:740px;font-size:15px;color:#cfcfcf;letter-spacing:-.1px">Scrivi qui per eseguire la ricerca</div><svg style="left:365px;top:739px" width="12" height="19" viewBox="0 0 12 19"><rect x="3.5" y=".5" width="5" height="11" rx="2.5" fill="none" stroke="#ddd" stroke-width="1"/><path d="M1 8 V9.5 A5 5 0 0 0 11 9.5 V8 M6 14.5 V18 M3 18 H9" fill="none" stroke="#ddd" stroke-width="1"/></svg><svg style="left:0;top:728px" width="440" height="40" viewBox="0 728 440 40"><path d="M408.2 740 H420.6 M408.2 754.6 H420.6 M408.7 740 V742.6 M420 740 V742.6 M408.7 752 V754.6 M420 752 V754.6 M422.9 739.4 V743 M422.9 747.2 V755.2" stroke="#fff" stroke-width="1.3" fill="none"/><rect x="409.6" y="743.6" width="9" height="7.6" fill="none" stroke="#fff" stroke-width="1.3"/><rect x="421.4" y="743.8" width="3" height="2.6" fill="#fff"/></svg><svg style="left:456px;top:738px" width="23" height="20" viewBox="0 0 23 20"><path d="M0 2 a1 1 0 0 1 1-1 h7 l2 2 h12 a1 1 0 0 1 1 1 v14 a1 1 0 0 1-1 1 h-21 a1 1 0 0 1-1-1z" fill="#f4c64a"/><rect x="0" y="5" width="23" height="14" rx="1" fill="#ffe08a"/><rect x="5" y="10" width="13" height="9" fill="#3a8fd8"/><rect x="8" y="14" width="7" height="5" fill="#ffe08a"/></svg><svg style="left:503px;top:735px" width="25" height="25" viewBox="0 0 25 25"><circle cx="12.5" cy="13" r="11.5" fill="#ff9500"/><path d="M12.5 1.5 A11.5 11.5 0 0 1 24 13 A11.5 11.5 0 0 1 12.5 24.5 C18 22 20 16 18 11 C16 7 12 6 8 8 C9 4 11 2.5 12.5 1.5z" fill="#ffcb00"/><circle cx="11.5" cy="13.5" r="6.5" fill="#3a3f9f"/><path d="M1 13 C1 8 3 4.5 6 3 C5.5 6 6.5 8 9 9.5 C11 10.5 13 10 13.5 12 C13.8 13.5 12 14 10.5 13.6 C11 16 13 17.5 16 17 C14 20.5 10 21.5 6 20 C3 18.5 1 16 1 13z" fill="#e8402a"/></svg><div class="a" style="left:555.8px;top:739.6px;width:18.6px;height:17.6px;border-radius:7.5px;background:#fff;transform:rotate(-12deg)"></div><div class="t" style="left:559.2px;top:740.6px;font-size:14.5px;font-weight:bold;color:#111;font-family:'DejaVu Sans',sans-serif;transform:rotate(-15deg)">#</div><div class="a" style="left:590px;top:727.7px;width:48.2px;height:40.3px;background:#3d4a53"></div><svg style="left:601px;top:735px" width="25" height="25" viewBox="0 0 16 16"><path d="M1 5 C3 1 8 -1 13 3 C10 1.5 5 2 3 6z" fill="#2a8fd0"/><path d="M1 5.5 C0 9 3 13 7 15.5 C8 12 8 8 4.5 5.5 C3 4.8 1.5 5 1 5.5z" fill="#3a9a3a"/><path d="M5.5 5 C9 3 13 4 14.5 6 C14 9.5 11 13.5 8 15.5 C9 12 9 8 5.5 5z" fill="#b86a50"/></svg><div class="a" style="left:447px;top:766px;width:40px;height:2px;background:#ee9a84"></div><div class="a" style="left:496px;top:766px;width:40px;height:2px;background:#ee9a84"></div><div class="a" style="left:545px;top:766px;width:40px;height:2px;background:#ee9a84"></div><div class="a" style="left:590px;top:766px;width:48px;height:2px;background:#ee9a84"></div><svg style="left:1091px;top:739px" width="17" height="17" viewBox="0 0 17 17"><circle cx="11" cy="4" r="2.6" fill="none" stroke="#fff" stroke-width="1.1"/><path d="M6.5 10.5 A4.5 4.5 0 0 1 15.5 10.5" fill="none" stroke="#fff" stroke-width="1.1"/><circle cx="4.5" cy="8.5" r="2.2" fill="none" stroke="#fff" stroke-width="1.1"/><path d="M1 16 A3.6 3.6 0 0 1 8.2 16" fill="none" stroke="#fff" stroke-width="1.1"/></svg><svg style="left:1128px;top:744px" width="13" height="8" viewBox="0 0 13 8"><path d="M1 7 L6.5 1.5 L12 7" fill="none" stroke="#fff" stroke-width="1.2"/></svg><svg style="left:1150px;top:741px" width="18" height="12" viewBox="0 0 18 12"><path d="M4 11.5 a3.5 3.5 0 0 1 .5-7 a4.5 4.5 0 0 1 8.5-1 a4 4 0 0 1 1.5 8z" fill="#fff"/><path d="M7 11.5 a3 3 0 0 1 1-5.5 a3.5 3.5 0 0 1 6.5 0 a3 3 0 0 1 .5 5.5z" fill="#fff" stroke="#1f1f1f" stroke-width=".8"/></svg><svg style="left:1174px;top:741px" width="18" height="12" viewBox="0 0 18 12"><rect x="4.5" y="3.5" width="11" height="7" fill="none" stroke="#fff" stroke-width="1"/><rect x="6" y="5" width="5" height="4" fill="#fff"/><path d="M16 5.5 V8.5" stroke="#fff" stroke-width="1.4"/><path d="M2.5 0 V3 M0.5 3 H4.5 V5 a2 2 0 0 1-4 0z M2.5 7V11" stroke="#fff" stroke-width="1" fill="#1f1f1f"/></svg><svg style="left:1200px;top:740px" width="16" height="14" viewBox="0 0 16 14"><g fill="none" stroke="#fff" stroke-width="1.1"><path d="M1 13 A12 12 0 0 1 13 1" /><path d="M4.5 13 A8.5 8.5 0 0 1 13 4.5" opacity=".8"/><path d="M8 13 A5 5 0 0 1 13 8" opacity=".7"/></g><circle cx="12" cy="12" r="1.5" fill="#fff"/></svg><svg style="left:1223px;top:740px" width="18" height="14" viewBox="0 0 18 14"><path d="M.5 4.5 H3.5 L7.5 1 V13 L3.5 9.5 H.5z" fill="none" stroke="#fff" stroke-width="1"/><path d="M10 4.5 A3.5 3.5 0 0 1 10 9.5 M12 2.5 A6 6 0 0 1 12 11.5 M14 .8 A8.5 8.5 0 0 1 14 13.2" fill="none" stroke="#fff" stroke-width="1"/></svg><div class="t" style="left:1247px;width:60px;text-align:center;top:733px;font-size:12px;color:#fff;letter-spacing:-.4px">15:26</div><div class="t" style="left:1242px;width:70px;text-align:center;top:751px;font-size:12px;color:#fff;letter-spacing:-.4px">13/10/2018</div><svg style="left:1324px;top:739px" width="17" height="17" viewBox="0 0 17 17"><path d="M.5 .5 H16.5 V12.5 H11 L8.5 15.5 L6 12.5 H.5z" fill="none" stroke="#fff" stroke-width="1.1"/></svg></body></html>
